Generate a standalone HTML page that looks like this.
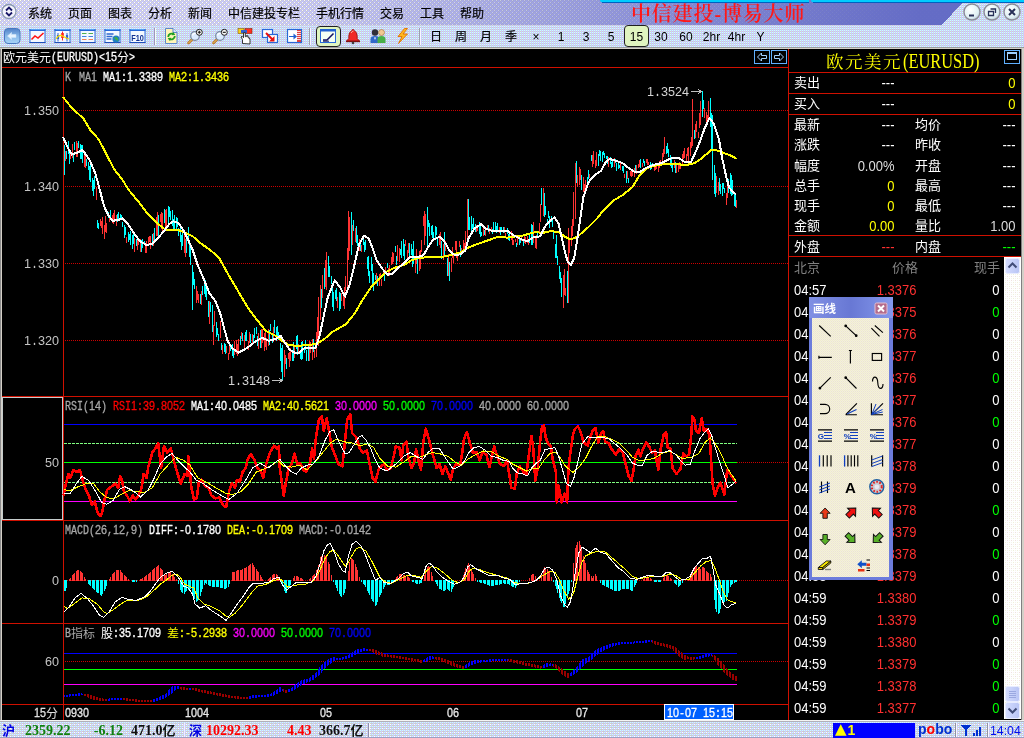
<!DOCTYPE html>
<html lang="zh"><head><meta charset="utf-8"><title>中信建投-博易大师</title><style>
html,body{margin:0;padding:0;background:#000}
#app{will-change:transform;position:relative;width:1024px;height:738px;overflow:hidden;background:#000;font-family:"Liberation Sans","Noto Sans CJK SC",sans-serif;font-size:12px;line-height:1}
#app div,#app span{position:absolute;white-space:nowrap;box-sizing:border-box}
.cj{font-family:"Liberation Sans","Noto Sans CJK SC",sans-serif;font-size:12px;line-height:12px;-webkit-text-stroke:0.2px}
.ar{font-family:"Liberation Sans","Noto Sans CJK SC",sans-serif;font-size:13px;line-height:13px}
.t i{font-style:normal}
.title{font-family:"Liberation Serif","Noto Serif CJK SC",serif;font-weight:600;font-size:20px;line-height:22px;color:#ff1818;letter-spacing:0.85px}
.pb{font-family:"Liberation Sans",sans-serif;font-size:12px;line-height:12px}
.rh{font-family:"Liberation Serif","Noto Serif CJK SC",serif;font-size:19px;line-height:20px;color:#ffff00}
.rc{font-family:"Liberation Sans","Noto Sans CJK SC",sans-serif;font-size:13px;line-height:13px}
.sb{font-family:"Liberation Serif","Noto Serif CJK SC",serif;font-weight:bold;font-size:14px;line-height:14px}
.sbc{font-family:"Liberation Serif","Noto Sans CJK SC",sans-serif;font-weight:bold;font-size:13px;line-height:14px}
.pobo{font-family:"Liberation Sans",sans-serif;font-weight:bold;font-size:14px;line-height:15px;color:#0030d0}
.mg{font-size:0;line-height:0}
.mg i{position:relative;display:inline-block;vertical-align:top;white-space:pre;transform-origin:0 0;overflow:visible}
.mg .c6{font-family:"Liberation Sans","Noto Sans CJK SC",sans-serif;font-size:12px;line-height:12px}
.mg .n6{top:0.4px;font-family:"Liberation Mono",monospace;font-size:12.2px;line-height:12px;transform:scaleX(0.8197);-webkit-text-stroke:0.3px}
.mg .d6{top:-0.6px;font-family:"Liberation Sans",sans-serif;font-size:12.4px;line-height:12px;transform:scaleX(0.8703);-webkit-text-stroke:0.3px}
.mg .n7{font-family:"Liberation Mono",monospace;font-size:14px;line-height:14px;transform:scaleX(0.8333)}
.mg .d7{font-family:"Liberation Sans",sans-serif;font-size:12.6px;line-height:14px}
.axc{color:#c4c4c4}
.ar{transform:scaleY(1.1)}
.lg{color:#dcdcdc}
.w{color:#fff}.y{color:#ff0}.g{color:#a8a8a8}.r{color:#ff3030}.gr{color:#0f0}.m{color:#f0f}.b{color:#00f}.dg{color:#808080}
</style></head><body><div id="app">
<svg width="1024" height="49" viewBox="0 0 1024 49" shape-rendering="crispEdges" style="position:absolute;left:0;top:0"><defs><pattern id="p1" width="4" height="4" patternUnits="userSpaceOnUse"><rect width="4" height="4" fill="#ccccff"/><rect x="1" y="0" width="1" height="1" fill="#cccccc"/><rect x="3" y="2" width="1" height="1" fill="#cccccc"/><rect x="0" y="1" width="1" height="1" fill="#cccccc"/><rect x="2" y="3" width="1" height="1" fill="#cccccc"/><rect x="1" y="2" width="1" height="1" fill="#c8c8e0"/><rect x="3" y="0" width="1" height="1" fill="#c8c8e0"/><rect x="0" y="0" width="1" height="1" fill="#fff"/><rect x="2" y="2" width="1" height="1" fill="#fff"/></pattern><pattern id="p2" width="4" height="4" patternUnits="userSpaceOnUse"><rect width="4" height="4" fill="#ccccff"/><rect x="0" y="0" width="1" height="1" fill="#ccffff"/><rect x="2" y="2" width="1" height="1" fill="#ccffff"/><rect x="2" y="0" width="1" height="1" fill="#ccffff"/><rect x="0" y="2" width="1" height="1" fill="#ccffff"/><rect x="0" y="1" width="1" height="1" fill="#cccccc"/><rect x="2" y="1" width="1" height="1" fill="#cccccc"/><rect x="0" y="3" width="1" height="1" fill="#cccccc"/><rect x="2" y="3" width="1" height="1" fill="#cccccc"/></pattern><linearGradient id="tg" x1="0" x2="1" y1="0" y2="0"><stop offset="0" stop-color="#6068c4" stop-opacity="0"/><stop offset="0.27" stop-color="#6068c4" stop-opacity="0.03"/><stop offset="0.5" stop-color="#6068c4" stop-opacity="0.38"/><stop offset="0.7" stop-color="#6068c4" stop-opacity="0.72"/><stop offset="0.9" stop-color="#6068c4" stop-opacity="0.96"/><stop offset="1" stop-color="#6068c4" stop-opacity="0.96"/></linearGradient></defs><rect x="0" y="0" width="1024" height="25" fill="url(#p1)"/><rect x="0" y="0" width="1024" height="25" fill="url(#tg)"/><polygon points="942,25 962,3 1024,3 1024,25" fill="url(#p2)"/><rect x="0" y="25" width="1024" height="22" fill="url(#p2)"/><rect x="0" y="47" width="1024" height="1" fill="#9c9c9c"/><rect x="0" y="48" width="1024" height="1" fill="#d4d0c8"/><path d="M600 0H809V2.5H603Q600 2.5 600 0Z" fill="#00ccff" shape-rendering="auto"/><path d="M811 0H1024V2.5H814Q811 2.5 811 0Z" fill="#00ccff" shape-rendering="auto"/><rect x="602" y="2" width="207" height="1" fill="#0060c0"/><rect x="813" y="2" width="211" height="1" fill="#0060c0"/></svg>
<div style="left:0;top:49px;width:1px;height:671px;background:#8c8c8c"></div>
<div style="left:1px;top:49px;width:1px;height:671px;background:#d4d0c8"></div>
<div style="left:1021px;top:49px;width:1px;height:671px;background:#808080"></div>
<div style="left:1022px;top:49px;width:2px;height:671px;background:#d4d0c8"></div>
<svg id="chart" width="1024" height="738" viewBox="0 0 1024 738" shape-rendering="crispEdges" style="position:absolute;left:0;top:0"><line x1="65" y1="110.5" x2="788" y2="110.5" stroke="#cc0000" stroke-width="1" stroke-dasharray="1 1"/>
<line x1="65" y1="186.5" x2="788" y2="186.5" stroke="#cc0000" stroke-width="1" stroke-dasharray="1 1"/>
<line x1="65" y1="263.5" x2="788" y2="263.5" stroke="#cc0000" stroke-width="1" stroke-dasharray="1 1"/>
<line x1="65" y1="340.5" x2="788" y2="340.5" stroke="#cc0000" stroke-width="1" stroke-dasharray="1 1"/>
<line x1="737" y1="462.5" x2="788" y2="462.5" stroke="#cc0000" stroke-width="1" stroke-dasharray="1 1"/>
<line x1="65" y1="580.5" x2="788" y2="580.5" stroke="#cc0000" stroke-width="1" stroke-dasharray="1 1"/>
<line x1="65" y1="661.5" x2="788" y2="661.5" stroke="#cc0000" stroke-width="1" stroke-dasharray="1 1"/>
<line x1="2" y1="67.5" x2="789" y2="67.5" stroke="#d01000" stroke-width="1"/>
<line x1="2" y1="396.5" x2="789" y2="396.5" stroke="#d01000" stroke-width="1"/>
<line x1="2" y1="520.5" x2="789" y2="520.5" stroke="#d01000" stroke-width="1"/>
<line x1="2" y1="623.5" x2="789" y2="623.5" stroke="#d01000" stroke-width="1"/>
<line x1="2" y1="704.5" x2="789" y2="704.5" stroke="#d01000" stroke-width="1"/>
<line x1="63.5" y1="67" x2="63.5" y2="720" stroke="#d01000" stroke-width="1"/>
<line x1="788.5" y1="49" x2="788.5" y2="720" stroke="#d01000" stroke-width="1"/>
<line x1="789" y1="72.5" x2="1021" y2="72.5" stroke="#d01000" stroke-width="1"/>
<line x1="789" y1="93.5" x2="1021" y2="93.5" stroke="#d01000" stroke-width="1"/>
<line x1="789" y1="114.5" x2="1021" y2="114.5" stroke="#d01000" stroke-width="1"/>
<line x1="789" y1="235.5" x2="1021" y2="235.5" stroke="#d01000" stroke-width="1"/>
<line x1="789" y1="256.5" x2="1021" y2="256.5" stroke="#d01000" stroke-width="1"/>
<line x1="64" y1="424.5" x2="737" y2="424.5" stroke="#0000ff" stroke-width="1"/>
<line x1="64" y1="462.5" x2="737" y2="462.5" stroke="#00ff00" stroke-width="1"/>
<line x1="64" y1="501.5" x2="737" y2="501.5" stroke="#ff00ff" stroke-width="1"/>
<line x1="64" y1="443.5" x2="737" y2="443.5" stroke="#80ff80" stroke-width="1" stroke-dasharray="3 1"/>
<line x1="64" y1="482.5" x2="737" y2="482.5" stroke="#80ff80" stroke-width="1" stroke-dasharray="3 1"/>
<line x1="64" y1="653.5" x2="737" y2="653.5" stroke="#0000ff" stroke-width="1"/>
<line x1="64" y1="669.5" x2="737" y2="669.5" stroke="#00ff00" stroke-width="1"/>
<line x1="64" y1="684.5" x2="737" y2="684.5" stroke="#ff00ff" stroke-width="1"/>
<rect x="2.5" y="397.5" width="60" height="122" fill="none" stroke="#c4cccc" stroke-width="1"/>
<path d="M64.5 145 V175M66.5 151 V159M68.5 141 V154M69.5 151 V164M73.5 155 V162M74.5 142 V150M78.5 141 V148M80.5 144 V159M81.5 145 V159M82.5 145 V163M86.5 159 V166M88.5 162 V170M89.5 166 V180M90.5 165 V182M92.5 178 V191M93.5 180 V196M94.5 176 V189M97.5 220 V228M98.5 223 V229M108.5 212 V218M110.5 210 V217M117.5 214 V222M118.5 212 V221M120.5 214 V219M121.5 215 V219M122.5 222 V227M124.5 225 V238M125.5 227 V235M128.5 232 V242M129.5 234 V240M130.5 231 V245M132.5 235 V249M133.5 234 V244M136.5 239 V246M141.5 240 V252M142.5 239 V248M144.5 241 V245M152.5 234 V246M154.5 228 V242M158.5 215 V237M164.5 209 V223M168.5 206 V223M169.5 207 V217M170.5 211 V220M172.5 210 V226M173.5 219 V231M174.5 215 V231M176.5 217 V229M177.5 218 V227M178.5 228 V236M180.5 228 V242M181.5 235 V250M182.5 231 V246M186.5 238 V253M188.5 227 V244M189.5 242 V257M190.5 243 V265M192.5 265 V310M193.5 272 V285M194.5 279 V289M200.5 294 V304M202.5 286 V295M204.5 282 V294M205.5 280 V297M206.5 288 V300M208.5 301 V317M210.5 302 V312M212.5 305 V332M216.5 322 V337M217.5 328 V335M218.5 334 V341M221.5 343 V350M224.5 343 V352M225.5 344 V354M230.5 346 V351M232.5 344 V356M233.5 348 V358M240.5 336 V345M242.5 333 V341M245.5 332 V341M246.5 330 V341M250.5 334 V343M253.5 335 V344M254.5 328 V338M256.5 327 V334M257.5 336 V346M260.5 330 V348M269.5 330 V345M270.5 324 V331M272.5 335 V343M274.5 320 V333M276.5 327 V341M277.5 326 V338M278.5 332 V340M280.5 343 V361M281.5 348 V372M282.5 345 V380M286.5 358 V369M292.5 353 V361M293.5 342 V361M296.5 336 V349M297.5 335 V355M300.5 351 V359M301.5 342 V360M302.5 341 V359M304.5 347 V353M305.5 340 V350M306.5 350 V361M308.5 344 V361M313.5 339 V352M321.5 289 V308M324.5 268 V289M328.5 256 V277M329.5 266 V277M331.5 276 V284M332.5 288 V307M333.5 292 V311M335.5 290 V299M336.5 288 V301M339.5 292 V311M340.5 293 V309M351.5 212 V255M353.5 220 V231M356.5 226 V243M357.5 235 V246M360.5 240 V251M363.5 239 V245M364.5 242 V252M365.5 240 V250M367.5 257 V269M368.5 256 V276M369.5 271 V283M371.5 257 V271M372.5 264 V285M373.5 273 V291M375.5 275 V280M377.5 276 V286M384.5 272 V281M387.5 263 V268M395.5 246 V252M396.5 256 V265M400.5 249 V255M401.5 241 V258M403.5 239 V256M404.5 244 V260M409.5 243 V256M411.5 244 V255M412.5 249 V267M413.5 241 V264M417.5 258 V274M427.5 207 V250M428.5 220 V227M429.5 223 V236M431.5 226 V235M432.5 225 V238M433.5 232 V238M435.5 226 V238M436.5 227 V235M437.5 239 V246M441.5 241 V259M444.5 232 V256M447.5 258 V276M449.5 262 V281M460.5 245 V257M468.5 199 V230M469.5 217 V230M471.5 216 V232M472.5 224 V229M473.5 218 V232M475.5 224 V232M479.5 222 V234M480.5 225 V237M481.5 232 V236M484.5 230 V235M488.5 225 V232M492.5 229 V234M493.5 222 V232M495.5 222 V230M496.5 226 V233M497.5 223 V230M500.5 227 V235M501.5 227 V232M503.5 227 V233M507.5 228 V234M508.5 234 V240M509.5 232 V241M516.5 243 V247M519.5 237 V245M520.5 238 V243M523.5 240 V246M529.5 233 V243M531.5 224 V245M532.5 225 V245M537.5 232 V237M541.5 188 V205M544.5 193 V217M545.5 206 V215M547.5 219 V225M548.5 211 V218M549.5 216 V228M551.5 216 V222M552.5 220 V227M553.5 230 V239M555.5 244 V258M556.5 235 V258M557.5 256 V265M559.5 266 V279M560.5 272 V283M561.5 278 V297M567.5 271 V303M576.5 161 V183M581.5 175 V190M587.5 177 V182M588.5 170 V179M591.5 155 V161M598.5 154 V166M599.5 150 V156M600.5 151 V161M602.5 152 V162M603.5 151 V155M604.5 153 V158M606.5 156 V159M607.5 156 V164M610.5 157 V164M611.5 162 V168M612.5 160 V167M615.5 159 V163M616.5 163 V171M618.5 163 V169M619.5 165 V168M622.5 166 V171M623.5 166 V173M626.5 171 V183M628.5 178 V183M635.5 165 V172M640.5 159 V168M643.5 159 V163M644.5 161 V166M650.5 162 V170M651.5 164 V169M652.5 163 V167M666.5 146 V154M667.5 143 V153M668.5 149 V157M670.5 155 V166M671.5 157 V168M672.5 163 V172M675.5 162 V173M694.5 130 V139M702.5 91 V117M703.5 100 V109M710.5 98 V127M711.5 113 V150M712.5 115 V180M714.5 165 V194M715.5 173 V197M719.5 178 V191M720.5 184 V194M722.5 183 V196M723.5 183 V189M724.5 188 V193M728.5 179 V193M730.5 173 V194M731.5 175 V196M732.5 180 V195M734.5 193 V206M735.5 194 V207" stroke="#00ffff" stroke-width="1" fill="none"/>
<path d="M65.5 151 V161M70.5 150 V159M72.5 144 V158M76.5 141 V157M77.5 143 V157M84.5 155 V167M85.5 153 V168M96.5 187 V200M100.5 219 V226M101.5 221 V228M102.5 217 V234M104.5 225 V239M105.5 216 V232M106.5 223 V233M109.5 215 V222M112.5 215 V223M113.5 213 V224M114.5 210 V221M116.5 215 V226M126.5 237 V243M134.5 238 V252M137.5 239 V250M138.5 238 V245M140.5 239 V252M145.5 243 V253M146.5 241 V253M148.5 237 V244M149.5 236 V242M150.5 236 V249M153.5 233 V246M156.5 217 V236M157.5 212 V236M160.5 214 V222M161.5 212 V229M162.5 213 V232M165.5 210 V229M166.5 209 V227M184.5 234 V253M185.5 239 V257M196.5 286 V303M197.5 291 V300M198.5 294 V303M201.5 291 V305M209.5 301 V324M213.5 325 V345M214.5 311 V326M220.5 321 V338M222.5 345 V354M226.5 346 V353M228.5 353 V360M229.5 345 V354M234.5 341 V355M236.5 340 V354M237.5 344 V356M238.5 339 V353M241.5 332 V339M244.5 335 V350M248.5 341 V350M249.5 332 V343M252.5 334 V345M258.5 333 V349M261.5 329 V348M262.5 329 V343M264.5 333 V351M265.5 331 V347M266.5 338 V350M268.5 329 V346M273.5 327 V342M284.5 350 V377M285.5 355 V364M288.5 353 V359M289.5 352 V367M290.5 348 V361M294.5 346 V358M298.5 344 V352M309.5 341 V361M310.5 342 V353M312.5 339 V360M314.5 350 V358M316.5 332 V357M317.5 317 V339M318.5 297 V346M320.5 285 V320M322.5 275 V298M325.5 260 V287M326.5 252 V290M337.5 297 V308M341.5 293 V301M343.5 296 V306M344.5 287 V309M345.5 276 V291M347.5 248 V293M348.5 211 V260M349.5 217 V251M352.5 225 V245M355.5 228 V242M359.5 239 V251M361.5 245 V252M376.5 273 V284M379.5 274 V286M380.5 273 V279M381.5 279 V286M383.5 269 V275M385.5 267 V274M388.5 268 V276M389.5 265 V276M391.5 257 V265M392.5 252 V264M393.5 253 V262M397.5 245 V261M399.5 248 V262M405.5 240 V246M407.5 250 V259M408.5 243 V253M415.5 258 V273M416.5 249 V264M419.5 251 V271M420.5 250 V269M421.5 240 V252M423.5 216 V226M424.5 211 V245M425.5 214 V236M439.5 234 V245M440.5 232 V248M443.5 244 V260M445.5 241 V251M448.5 254 V276M451.5 258 V272M452.5 247 V258M453.5 253 V263M455.5 241 V250M456.5 241 V258M457.5 252 V261M459.5 241 V247M461.5 248 V255M463.5 240 V249M464.5 243 V252M465.5 231 V247M467.5 199 V240M476.5 225 V232M477.5 226 V231M483.5 225 V236M485.5 229 V236M487.5 225 V230M489.5 228 V234M491.5 227 V231M499.5 227 V233M504.5 227 V233M505.5 233 V237M511.5 231 V240M512.5 238 V245M513.5 240 V245M515.5 239 V242M517.5 236 V245M521.5 237 V241M524.5 236 V243M525.5 237 V244M527.5 236 V243M528.5 240 V245M533.5 222 V243M535.5 236 V248M536.5 235 V249M539.5 223 V234M540.5 204 V222M543.5 188 V216M563.5 275 V308M564.5 269 V295M565.5 288 V296M568.5 228 V303M569.5 240 V253M571.5 226 V246M572.5 219 V236M573.5 192 V226M575.5 163 V219M577.5 175 V187M579.5 167 V185M580.5 169 V180M583.5 177 V192M584.5 184 V194M585.5 180 V189M589.5 174 V178M592.5 155 V167M593.5 151 V164M595.5 160 V168M596.5 152 V166M608.5 157 V167M614.5 158 V167M620.5 163 V170M624.5 174 V178M627.5 171 V179M630.5 171 V176M631.5 170 V177M632.5 170 V176M634.5 168 V177M636.5 165 V174M638.5 164 V168M639.5 160 V167M642.5 163 V167M646.5 159 V163M647.5 159 V165M648.5 162 V165M654.5 165 V171M655.5 164 V170M656.5 165 V169M658.5 164 V172M659.5 161 V168M660.5 160 V165M662.5 153 V161M663.5 149 V157M664.5 137 V154M674.5 160 V168M676.5 165 V173M678.5 164 V172M679.5 162 V169M680.5 164 V169M682.5 154 V165M683.5 151 V159M684.5 148 V158M686.5 154 V163M687.5 148 V156M688.5 147 V163M690.5 142 V156M691.5 137 V148M692.5 99 V146M695.5 124 V138M696.5 121 V132M698.5 132 V138M699.5 113 V128M700.5 101 V125M704.5 108 V118M706.5 112 V123M707.5 115 V121M708.5 101 V118M716.5 176 V193M718.5 182 V195M726.5 193 V205M727.5 180 V198M736.5 200 V208" stroke="#ff3333" stroke-width="1" fill="none"/>
<path d="M64.5 580 V591M65.5 580 V591M66.5 580 V588M88.5 580 V584M89.5 580 V585M90.5 580 V586M92.5 580 V588M93.5 580 V589M94.5 580 V590M96.5 580 V592M97.5 580 V593M98.5 580 V593M100.5 580 V595M101.5 580 V596M102.5 580 V594M104.5 580 V591M105.5 580 V589M106.5 580 V586M132.5 580 V582M133.5 580 V582M134.5 580 V582M136.5 580 V582M178.5 580 V584M180.5 580 V590M181.5 580 V592M182.5 580 V593M184.5 580 V594M185.5 580 V592M186.5 580 V591M188.5 580 V590M189.5 580 V589M190.5 580 V589M192.5 580 V594M193.5 580 V597M194.5 580 V599M196.5 580 V602M197.5 580 V601M198.5 580 V600M200.5 580 V596M201.5 580 V592M202.5 580 V589M204.5 580 V585M205.5 580 V583M206.5 580 V584M208.5 580 V585M209.5 580 V586M210.5 580 V586M212.5 580 V587M213.5 580 V587M214.5 580 V587M216.5 580 V587M217.5 580 V587M218.5 580 V587M220.5 580 V588M221.5 580 V588M222.5 580 V588M224.5 580 V589M225.5 580 V589M226.5 580 V588M228.5 580 V587M229.5 580 V584M281.5 580 V584M282.5 580 V586M284.5 580 V591M285.5 580 V593M286.5 580 V593M288.5 580 V589M289.5 580 V587M290.5 580 V585M333.5 580 V582M335.5 580 V585M336.5 580 V588M337.5 580 V591M339.5 580 V594M340.5 580 V596M341.5 580 V597M343.5 580 V595M344.5 580 V593M345.5 580 V589M361.5 580 V582M363.5 580 V584M364.5 580 V585M365.5 580 V587M367.5 580 V591M368.5 580 V593M369.5 580 V595M371.5 580 V599M372.5 580 V601M373.5 580 V602M375.5 580 V606M376.5 580 V605M377.5 580 V602M379.5 580 V597M380.5 580 V595M381.5 580 V593M383.5 580 V589M384.5 580 V587M385.5 580 V585M387.5 580 V585M388.5 580 V585M389.5 580 V585M391.5 580 V584M392.5 580 V583M393.5 580 V582M412.5 580 V582M413.5 580 V582M415.5 580 V583M416.5 580 V584M417.5 580 V584M419.5 580 V584M420.5 580 V583M421.5 580 V583M435.5 580 V582M436.5 580 V584M437.5 580 V586M439.5 580 V589M440.5 580 V589M441.5 580 V590M443.5 580 V591M444.5 580 V591M445.5 580 V590M447.5 580 V589M448.5 580 V590M449.5 580 V591M451.5 580 V592M452.5 580 V589M453.5 580 V587M477.5 580 V582M479.5 580 V582M480.5 580 V583M481.5 580 V583M483.5 580 V583M484.5 580 V584M485.5 580 V584M487.5 580 V585M488.5 580 V585M489.5 580 V586M491.5 580 V586M492.5 580 V586M493.5 580 V586M495.5 580 V585M496.5 580 V585M497.5 580 V585M499.5 580 V585M500.5 580 V584M501.5 580 V584M503.5 580 V583M504.5 580 V584M505.5 580 V584M507.5 580 V584M508.5 580 V584M509.5 580 V585M511.5 580 V586M512.5 580 V587M513.5 580 V587M515.5 580 V588M516.5 580 V586M517.5 580 V584M519.5 580 V582M553.5 580 V582M555.5 580 V586M556.5 580 V589M557.5 580 V593M559.5 580 V598M560.5 580 V601M561.5 580 V603M563.5 580 V607M564.5 580 V607M565.5 580 V604M567.5 580 V598M568.5 580 V594M569.5 580 V591M571.5 580 V582M600.5 580 V583M602.5 580 V585M603.5 580 V585M604.5 580 V586M606.5 580 V587M607.5 580 V587M608.5 580 V588M610.5 580 V589M611.5 580 V589M612.5 580 V590M614.5 580 V591M615.5 580 V591M616.5 580 V591M618.5 580 V591M619.5 580 V591M620.5 580 V590M622.5 580 V589M623.5 580 V589M624.5 580 V589M626.5 580 V589M627.5 580 V589M628.5 580 V589M630.5 580 V590M631.5 580 V591M632.5 580 V591M634.5 580 V587M635.5 580 V585M636.5 580 V583M654.5 580 V582M655.5 580 V582M656.5 580 V582M658.5 580 V582M659.5 580 V582M660.5 580 V582M674.5 580 V583M675.5 580 V584M676.5 580 V585M678.5 580 V587M679.5 580 V586M680.5 580 V585M682.5 580 V583M714.5 580 V600M715.5 580 V609M716.5 580 V612M718.5 580 V614M719.5 580 V613M720.5 580 V609M722.5 580 V603M723.5 580 V602M724.5 580 V602M726.5 580 V601M727.5 580 V597M728.5 580 V593M730.5 580 V587M731.5 580 V585M732.5 580 V584M734.5 580 V583M735.5 580 V582M736.5 580 V582" stroke="#00ffff" stroke-width="1" fill="none"/>
<path d="M69.5 579 V581M70.5 578 V581M72.5 575 V581M73.5 574 V581M74.5 573 V581M76.5 571 V581M77.5 570 V581M78.5 570 V581M80.5 571 V581M81.5 572 V581M82.5 573 V581M84.5 577 V581M85.5 579 V581M109.5 579 V581M110.5 577 V581M112.5 574 V581M113.5 573 V581M114.5 572 V581M116.5 570 V581M117.5 570 V581M118.5 570 V581M120.5 570 V581M121.5 572 V581M122.5 573 V581M124.5 575 V581M125.5 576 V581M126.5 577 V581M128.5 579 V581M140.5 579 V581M141.5 579 V581M142.5 578 V581M144.5 577 V581M145.5 576 V581M146.5 575 V581M148.5 574 V581M149.5 573 V581M150.5 572 V581M152.5 570 V581M153.5 569 V581M154.5 568 V581M156.5 567 V581M157.5 566 V581M158.5 565 V581M160.5 568 V581M161.5 569 V581M162.5 570 V581M164.5 574 V581M165.5 575 V581M166.5 574 V581M168.5 572 V581M169.5 572 V581M170.5 572 V581M172.5 574 V581M173.5 575 V581M174.5 577 V581M176.5 579 V581M232.5 572 V581M233.5 572 V581M234.5 572 V581M236.5 571 V581M237.5 570 V581M238.5 570 V581M240.5 570 V581M241.5 570 V581M242.5 569 V581M244.5 568 V581M245.5 568 V581M246.5 567 V581M248.5 566 V581M249.5 565 V581M250.5 564 V581M252.5 563 V581M253.5 565 V581M254.5 567 V581M256.5 569 V581M257.5 571 V581M258.5 572 V581M260.5 575 V581M261.5 577 V581M262.5 579 V581M268.5 579 V581M269.5 578 V581M270.5 577 V581M272.5 575 V581M273.5 574 V581M274.5 574 V581M276.5 574 V581M277.5 575 V581M278.5 577 V581M293.5 578 V581M294.5 576 V581M296.5 576 V581M297.5 576 V581M298.5 577 V581M300.5 578 V581M301.5 578 V581M302.5 579 V581M309.5 579 V581M310.5 578 V581M312.5 576 V581M313.5 575 V581M314.5 574 V581M316.5 570 V581M317.5 569 V581M318.5 565 V581M320.5 557 V581M321.5 556 V581M322.5 555 V581M324.5 555 V581M325.5 556 V581M326.5 557 V581M328.5 562 V581M329.5 564 V581M331.5 575 V581M348.5 571 V581M349.5 562 V581M351.5 558 V581M352.5 559 V581M353.5 560 V581M355.5 564 V581M356.5 567 V581M357.5 570 V581M359.5 577 V581M395.5 579 V581M396.5 577 V581M397.5 576 V581M399.5 574 V581M400.5 574 V581M401.5 574 V581M403.5 575 V581M404.5 575 V581M405.5 576 V581M407.5 576 V581M408.5 577 V581M409.5 578 V581M424.5 575 V581M425.5 570 V581M427.5 567 V581M428.5 566 V581M429.5 567 V581M431.5 572 V581M432.5 576 V581M463.5 575 V581M464.5 572 V581M465.5 568 V581M467.5 565 V581M468.5 563 V581M469.5 565 V581M471.5 569 V581M472.5 572 V581M473.5 574 V581M475.5 578 V581M529.5 578 V581M531.5 575 V581M532.5 574 V581M533.5 574 V581M535.5 576 V581M541.5 573 V581M543.5 569 V581M544.5 567 V581M545.5 568 V581M547.5 569 V581M548.5 571 V581M549.5 572 V581M551.5 577 V581M573.5 563 V581M575.5 548 V581M576.5 545 V581M577.5 542 V581M579.5 541 V581M580.5 545 V581M581.5 549 V581M583.5 556 V581M584.5 560 V581M585.5 563 V581M587.5 570 V581M588.5 572 V581M589.5 574 V581M591.5 576 V581M592.5 578 V581M593.5 576 V581M595.5 574 V581M596.5 576 V581M643.5 579 V581M644.5 578 V581M646.5 577 V581M647.5 576 V581M648.5 577 V581M650.5 578 V581M651.5 579 V581M663.5 578 V581M664.5 576 V581M666.5 575 V581M667.5 575 V581M668.5 576 V581M670.5 578 V581M671.5 579 V581M688.5 579 V581M690.5 576 V581M691.5 574 V581M692.5 571 V581M694.5 568 V581M695.5 567 V581M696.5 566 V581M698.5 567 V581M699.5 568 V581M700.5 569 V581M702.5 567 V581M703.5 567 V581M704.5 568 V581M706.5 571 V581M707.5 572 V581M708.5 573 V581M710.5 574 V581M711.5 577 V581" stroke="#ff3333" stroke-width="1" fill="none"/>
<polyline points="63.0,97.0 71.0,107.0 83.4,118.6 90.3,130.0 99.0,139.8 106.9,155.4 114.7,170.0 122.5,179.8 128.4,189.6 138.1,201.3 147.9,214.0 157.7,223.8 165.5,229.6 177.2,229.6 185.0,232.5 192.8,236.4 200.6,243.3 210.4,250.1 219.0,257.8 228.8,275.4 238.6,292.0 248.4,308.6 258.1,321.3 266.0,331.0 275.7,336.0 283.5,341.8 289.4,345.3 297.2,345.7 307.0,345.3 316.7,343.8 324.5,338.9 332.3,332.0 346.0,324.2 355.2,312.8 363.0,299.1 370.8,287.4 378.6,279.6 386.4,271.8 394.2,267.9 404.0,265.0 411.8,260.1 419.6,257.7 429.4,257.3 441.1,257.1 450.9,255.2 460.6,252.3 468.4,247.4 476.3,244.5 486.0,241.0 497.7,237.0 507.5,237.6 511.7,237.0 523.4,235.4 535.2,232.1 543.0,232.9 550.8,231.0 558.6,232.1 564.5,236.4 569.3,239.0 574.2,238.4 580.0,234.5 587.9,227.6 597.7,217.9 603.0,210.8 612.7,201.0 622.5,195.1 632.3,187.3 638.1,177.6 642.0,172.7 647.9,167.8 657.7,164.9 667.4,163.9 677.2,164.3 687.0,164.9 694.8,163.0 700.6,159.0 706.5,154.1 711.4,149.8 716.3,150.2 724.0,153.1 731.9,156.0 736.8,159.0" fill="none" stroke="#ffff00" stroke-width="2" />
<polyline points="62.9,136.8 67.8,147.6 71.7,154.4 77.6,152.5 82.5,150.1 89.3,159.3 95.2,173.0 99.0,186.6 104.0,206.2 108.8,216.0 112.7,220.8 118.6,219.8 122.5,218.3 128.4,224.7 134.2,233.5 140.0,241.3 146.0,244.8 151.8,244.3 157.7,238.4 163.5,231.6 169.4,223.8 173.3,221.4 178.2,222.8 183.0,229.6 188.0,239.4 192.7,250.0 197.6,264.6 203.4,278.3 209.3,293.0 215.2,300.8 220.0,312.5 224.0,328.0 227.9,341.8 232.7,348.6 238.6,352.5 244.5,349.6 250.3,345.7 256.2,340.8 262.0,337.9 268.9,340.8 275.7,338.9 280.6,335.9 284.5,341.8 289.4,349.6 294.3,352.5 299.1,352.5 303.0,348.6 308.9,347.7 315.7,347.7 319.6,336.0 322.0,324.0 327.8,297.2 334.6,280.6 339.5,286.4 345.0,296.2 349.3,285.5 354.2,266.0 359.0,244.5 364.0,235.7 368.8,238.6 372.7,248.4 376.6,260.0 382.5,268.9 387.4,274.7 392.3,273.8 397.1,268.9 404.0,263.0 409.8,257.1 417.7,257.1 423.5,255.2 428.4,246.4 433.3,239.6 440.1,236.6 445.0,242.5 449.9,251.3 454.8,255.2 460.6,254.2 465.5,250.3 468.4,238.6 474.3,228.8 481.1,223.9 486.0,228.8 491.9,230.8 501.6,231.2 507.8,231.0 513.7,235.4 521.5,239.3 527.3,241.3 533.2,237.4 540.0,236.4 545.0,226.6 550.8,219.8 554.7,217.5 558.6,223.7 561.5,236.4 564.5,250.0 567.4,260.8 570.7,265.1 574.2,257.9 577.1,240.3 580.0,220.8 583.4,197.0 588.3,182.4 594.2,175.6 601.0,170.7 605.9,162.0 609.8,159.0 616.6,161.0 622.5,163.0 628.4,167.8 634.2,171.7 640.0,172.0 646.0,167.8 653.8,164.9 661.6,163.0 667.4,160.0 673.3,157.6 679.1,158.4 685.0,162.0 690.9,162.0 694.8,154.0 699.6,142.4 704.5,128.7 709.4,118.0 713.3,122.9 716.2,130.7 719.2,140.5 722.1,158.0 726.0,175.6 729.0,187.3 731.9,190.8 735.8,194.2" fill="none" stroke="#ffffff" stroke-width="2" />
<polyline points="63.5,495.5 65.4,485.7 68.4,474.0 70.3,477.9 73.2,470.0 77.1,472.0 80.0,470.0 82.0,477.9 85.0,487.7 88.9,495.5 91.8,505.2 94.7,501.3 97.7,513.0 100.6,516.0 102.5,511.0 104.5,499.4 107.4,489.6 111.3,486.7 115.2,483.8 118.2,487.7 120.1,476.0 122.0,479.8 124.0,491.6 127.0,495.5 129.9,501.3 132.8,495.5 135.7,499.4 138.7,495.5 141.6,487.7 143.6,474.0 146.5,477.9 148.4,466.2 152.3,452.5 155.3,448.6 158.2,443.1 161.1,468.1 164.0,445.7 167.0,452.5 170.9,448.6 174.8,464.2 177.7,474.0 180.7,483.8 184.6,474.0 187.5,476.0 188.5,456.4 191.4,487.7 193.9,499.4 196.8,498.4 198.8,481.8 201.7,479.8 204.6,485.7 208.6,487.7 211.5,495.5 215.4,498.4 219.3,497.4 223.2,505.2 226.1,507.2 229.1,491.6 232.0,482.8 234.9,487.7 236.9,479.8 239.8,481.8 242.7,472.0 245.7,468.1 247.6,459.3 250.9,454.0 254.5,460.3 257.4,468.1 260.3,470.0 263.2,477.9 266.2,464.2 270.0,452.5 274.0,445.7 276.9,448.6 278.9,446.6 279.8,468.1 281.8,481.8 283.8,495.5 285.7,483.8 288.6,468.1 291.6,464.2 294.5,453.5 297.4,464.2 300.4,463.2 303.3,470.0 306.2,472.0 310.1,462.3 312.1,448.6 314.0,458.4 316.0,436.9 318.9,419.3 321.8,416.4 323.8,431.0 326.7,418.3 328.7,429.0 331.6,446.6 335.5,456.4 338.4,464.2 342.3,466.2 344.3,448.6 347.2,419.3 350.2,414.4 352.1,433.0 356.0,436.9 359.9,448.6 362.9,452.5 366.8,450.5 369.7,464.2 372.6,477.9 375.5,481.8 378.5,470.0 380.0,467.1 383.9,464.2 386.8,470.0 390.7,468.1 393.7,456.4 395.6,446.6 399.5,447.6 401.5,460.3 403.4,444.7 406.4,441.8 408.3,456.4 411.3,468.1 414.2,462.3 416.1,449.6 419.0,462.3 421.0,470.0 423.4,440.8 425.9,428.7 428.8,438.8 431.2,448.6 433.7,457.4 436.6,468.1 439.6,464.2 442.5,474.0 445.4,466.2 448.4,474.0 450.7,479.8 453.2,468.1 456.2,464.2 460.0,465.2 462.0,454.5 464.0,438.8 466.9,432.0 469.8,442.7 472.8,452.5 476.7,452.5 479.6,460.3 482.5,452.5 486.4,454.5 489.4,467.1 492.3,454.5 494.3,446.6 497.2,456.4 500.1,464.2 504.0,466.2 507.0,460.3 508.9,472.0 511.3,487.7 514.8,488.6 516.7,474.0 519.6,466.2 523.6,472.0 526.5,474.0 528.4,458.4 531.4,435.9 533.3,448.6 535.3,480.8 537.8,468.1 540.2,440.8 542.1,426.1 544.0,425.7 545.6,436.9 548.0,443.7 550.9,446.6 552.9,460.3 555.8,472.0 556.8,502.3 558.7,485.7 561.6,502.3 564.6,493.5 567.1,502.3 568.5,468.1 570.4,452.5 572.9,435.0 574.9,429.0 577.8,426.1 580.7,432.0 583.7,442.7 587.6,445.7 589.5,438.8 592.5,431.0 595.4,428.1 598.3,442.7 600.9,434.0 603.2,431.0 605.2,441.8 609.0,443.7 612.0,449.6 615.9,454.5 618.8,449.6 622.7,452.5 625.7,464.2 628.6,476.0 631.5,480.8 633.5,470.0 635.4,456.4 638.4,449.6 640.3,456.4 643.2,448.6 646.2,442.3 649.1,446.6 652.0,452.5 655.0,450.5 656.9,462.3 658.3,470.0 660.8,448.6 663.8,434.0 666.1,432.0 667.7,447.6 670.6,448.6 672.5,468.1 676.4,474.0 680.4,469.1 683.3,453.5 686.2,456.4 689.1,454.5 691.1,436.9 692.5,416.4 694.4,419.3 696.0,431.0 698.9,433.0 701.8,418.3 703.8,431.0 706.7,429.0 709.6,435.0 711.0,458.4 712.6,483.8 714.9,495.5 717.5,487.7 720.4,482.8 724.3,494.5 727.2,470.0 730.2,474.0 733.1,477.9 736.0,483.4" fill="none" stroke="#ff0000" stroke-width="2.6" stroke-linejoin="round"/>
<polyline points="63.5,489.6 70.3,490.6 78.1,486.7 85.9,483.8 93.8,483.8 99.6,491.6 106.4,497.4 113.3,499.0 121.1,494.5 128.9,490.6 136.7,491.6 144.5,492.5 152.3,487.7 160.2,474.0 168.0,465.2 175.8,457.4 183.6,460.3 190.0,465.2 197.8,477.9 207.6,482.8 217.3,488.6 225.2,493.0 233.0,494.5 240.8,491.6 248.6,483.8 256.4,472.0 264.2,469.0 272.0,465.2 277.9,460.3 283.8,466.2 291.6,467.1 299.4,465.2 307.2,470.0 315.0,462.3 322.8,452.5 330.6,442.7 336.5,439.2 344.3,441.8 352.1,443.1 359.9,445.7 367.8,443.7 373.6,447.6 380.0,458.4 387.8,466.2 395.6,467.1 403.4,462.3 411.3,456.4 419.0,457.4 426.9,454.5 432.7,452.5 440.5,454.0 448.4,456.4 455.2,462.3 462.0,465.2 467.9,459.3 475.7,454.5 483.5,451.0 491.3,451.5 499.1,456.4 507.0,459.3 512.8,464.2 520.6,468.1 526.5,471.0 534.3,468.1 538.2,469.0 544.0,460.3 549.9,453.5 555.8,452.1 560.7,458.4 565.5,466.2 570.0,470.0 572.9,472.4 579.8,466.2 585.6,458.4 591.5,446.6 597.3,436.9 604.2,436.3 611.0,439.2 618.8,442.7 626.6,450.5 632.5,457.4 638.4,460.3 646.2,459.9 654.0,458.4 661.8,453.5 669.6,451.0 675.5,454.5 682.3,458.4 691.1,457.4 698.9,453.5 704.8,442.7 710.2,437.9 715.5,443.7 721.4,454.5 726.3,466.2 731.1,474.0 736.0,480.8" fill="none" stroke="#ffff00" stroke-width="1" />
<polyline points="63.5,493.5 70.3,493.5 76.2,483.8 82.0,476.3 88.9,480.8 95.7,491.6 101.6,502.3 106.4,504.3 113.3,500.4 119.1,489.6 125.0,486.7 132.8,490.6 140.6,497.0 148.4,489.6 154.3,477.9 160.2,464.2 166.0,457.4 171.9,453.5 177.7,460.3 185.5,468.1 190.0,472.0 195.9,479.8 203.7,483.8 211.5,489.6 221.3,495.5 229.1,499.4 236.9,493.5 244.7,481.8 252.5,468.1 260.3,463.2 268.1,468.1 274.0,463.2 279.8,459.3 285.7,466.2 291.6,472.0 296.4,474.0 301.3,468.1 307.2,465.2 313.0,464.2 318.9,456.4 324.8,440.8 329.6,432.0 333.6,429.6 337.5,438.8 341.4,446.6 345.3,454.0 349.2,452.5 354.0,444.7 359.0,436.9 361.9,435.5 365.8,439.8 370.7,448.6 375.5,460.3 380.0,468.1 386.8,471.0 395.6,464.2 403.4,456.4 410.3,452.5 416.1,456.4 423.0,459.3 427.9,452.5 432.7,448.6 439.6,449.0 444.5,456.4 448.4,462.3 453.2,469.1 460.0,466.2 465.0,460.3 468.9,452.5 473.8,447.6 479.6,446.6 485.5,450.5 491.3,456.4 497.2,457.4 503.0,460.3 508.9,461.3 512.8,468.1 517.7,473.0 522.6,474.0 527.5,475.9 531.4,468.1 536.3,463.2 540.2,460.3 545.0,449.6 549.9,448.6 554.8,447.6 558.7,456.4 562.6,470.0 566.5,483.8 570.4,486.3 573.9,477.9 577.8,462.3 581.7,444.7 587.6,436.9 595.4,437.5 603.2,437.5 609.0,438.8 614.9,443.7 620.8,448.6 626.6,454.5 632.5,463.2 637.4,465.2 642.3,465.2 647.1,455.4 652.0,451.5 657.9,452.1 663.8,452.5 669.6,450.5 675.5,454.5 680.4,460.3 685.2,465.2 690.1,464.2 695.0,450.5 699.9,438.8 704.8,432.0 708.3,429.0 711.6,435.0 715.5,448.6 720.4,464.2 724.3,476.0 727.8,487.7 732.1,484.7 736.0,480.8" fill="none" stroke="#ffffff" stroke-width="1" />
<polyline points="63.5,605.7 67.4,608.6 74.2,603.8 82.0,597.9 89.8,598.9 97.7,604.7 103.5,611.6 107.4,613.5 113.3,609.6 121.1,603.8 127.0,600.2 138.7,600.2 146.5,596.9 154.3,590.0 160.2,584.2 166.0,580.3 171.9,575.4 175.8,574.0 179.7,576.4 184.6,584.2 189.5,586.2 193.9,588.1 197.8,597.9 203.7,603.8 211.5,606.7 219.3,610.6 225.2,615.5 229.1,617.4 234.9,613.5 242.7,604.7 250.5,594.0 257.4,586.2 266.2,584.2 274.0,580.3 280.8,579.3 287.7,587.1 295.5,585.2 305.2,584.2 313.0,581.3 318.9,572.5 324.8,558.8 329.6,552.0 333.6,550.0 338.4,555.9 343.3,563.7 346.3,566.6 351.1,556.9 356.0,549.1 359.9,547.1 365.8,551.0 371.6,560.8 377.5,572.5 380.0,577.4 385.9,582.3 391.7,583.2 399.5,579.3 407.3,575.4 413.2,575.4 421.0,577.4 426.9,570.5 431.8,566.6 436.6,567.6 444.5,573.5 452.3,580.3 458.1,582.7 464.0,580.3 468.9,571.5 472.8,568.2 479.6,569.6 487.4,572.5 497.2,575.4 507.0,578.0 513.8,582.3 520.6,583.8 528.4,583.2 536.3,580.3 543.0,575.4 549.9,571.5 554.8,572.1 558.7,578.4 563.6,590.0 568.5,598.9 572.4,595.9 573.9,592.0 577.8,576.4 581.7,562.7 585.6,555.9 591.5,553.0 597.3,551.4 605.2,552.0 611.0,556.9 618.8,563.7 626.6,570.5 632.5,576.4 638.4,578.8 646.2,577.4 654.0,576.4 661.8,577.0 669.6,574.0 675.5,575.4 681.3,579.3 689.1,579.3 695.0,572.5 700.9,565.7 706.7,561.2 711.6,560.8 715.5,569.6 719.4,580.3 723.3,592.0 727.2,599.5 732.1,601.8 736.0,602.8" fill="none" stroke="#ffff00" stroke-width="1" />
<polyline points="63.5,612.5 68.4,607.7 75.2,597.9 81.0,593.4 87.9,598.9 93.8,606.7 99.6,615.5 103.5,617.4 109.4,611.6 115.2,601.8 122.0,597.3 128.9,599.8 136.7,600.2 144.5,596.9 150.4,591.0 155.3,584.2 160.2,577.4 166.0,573.5 171.9,571.1 177.7,576.4 183.6,586.2 188.5,588.1 192.4,594.0 194.9,603.8 199.8,608.2 205.6,605.7 211.5,610.6 219.3,615.5 226.1,620.4 231.0,613.5 236.9,604.7 242.7,596.9 248.6,588.1 253.5,583.2 262.3,583.2 268.1,582.7 274.0,578.4 278.9,577.4 282.8,585.2 286.7,590.0 291.6,586.2 296.4,582.3 303.3,582.7 311.1,582.3 316.0,576.4 319.9,564.7 323.8,551.0 327.7,544.2 330.6,543.6 334.5,553.0 338.4,563.7 342.3,570.5 345.3,572.1 348.2,556.9 352.1,544.2 356.0,541.3 360.9,546.1 365.8,555.9 370.7,568.6 375.5,580.3 380.0,577.4 383.9,582.3 389.8,583.8 397.6,579.3 403.4,573.5 407.3,572.1 412.2,576.4 419.0,577.4 422.0,579.3 425.9,566.6 428.8,563.1 431.8,564.7 436.6,571.5 442.5,577.4 448.4,581.3 454.2,584.2 460.0,582.3 464.0,577.4 467.9,566.6 470.8,564.7 475.7,568.6 481.6,571.5 489.4,576.0 497.2,575.4 505.0,578.4 509.9,579.3 514.8,584.2 522.6,583.8 530.4,582.7 536.3,580.3 540.2,576.4 545.0,568.2 548.9,567.0 552.9,570.5 556.8,580.3 560.7,595.9 564.6,604.7 567.5,607.3 570.4,601.8 572.9,588.1 575.9,568.6 578.8,553.0 582.1,547.1 586.6,550.0 590.5,552.6 595.4,548.1 600.3,552.0 606.1,554.0 612.0,560.8 617.9,567.6 623.7,571.5 630.5,578.4 637.4,579.3 644.2,576.4 650.1,575.0 655.9,576.4 661.8,576.4 665.7,572.9 669.6,572.1 674.5,576.4 679.4,580.3 685.2,579.3 690.1,576.4 694.0,568.6 697.9,563.7 702.8,558.2 706.7,558.4 710.6,556.3 712.6,566.6 715.5,584.2 720.4,595.9 724.3,605.7 727.8,608.0 731.1,604.7 736.0,603.4" fill="none" stroke="#ffffff" stroke-width="1" />
<path d="M64.5 694.8 V696.7M66.5 694.6 V696.6M67.5 694.5 V696.6M69.5 694.4 V696.5M70.5 694.3 V696.4M72.5 694.2 V696.3M73.5 694.0 V696.2M75.5 693.7 V696.0M76.5 693.5 V695.9M78.5 693.2 V695.7M79.5 693.1 V695.6M81.5 693.2 V695.4M82.5 693.5 V695.3M108.5 698.5 V700.7M109.5 698.4 V700.6M111.5 698.2 V700.4M112.5 698.1 V700.4M114.5 697.9 V700.2M115.5 697.9 V700.1M117.5 697.9 V699.9M118.5 697.8 V699.9M120.5 697.7 V699.8M121.5 697.7 V699.7M153.5 699.2 V701.7M154.5 698.8 V701.6M156.5 698.1 V701.2M157.5 697.9 V701.0M159.5 697.0 V700.4M160.5 696.4 V700.0M162.5 695.1 V699.3M163.5 694.6 V698.9M165.5 693.6 V697.9M166.5 693.1 V697.4M168.5 690.4 V696.0M169.5 689.1 V695.3M171.5 686.8 V693.6M172.5 685.9 V692.6M174.5 685.9 V691.1M175.5 685.9 V690.3M177.5 685.6 V689.2M178.5 686.1 V689.1M189.5 687.8 V689.7M190.5 687.7 V689.6M249.5 696.4 V698.7M250.5 695.9 V698.7M252.5 695.2 V698.3M253.5 695.0 V698.1M255.5 695.1 V697.7M256.5 695.2 V697.5M258.5 695.0 V697.3M259.5 695.0 V697.2M261.5 694.8 V697.0M262.5 694.7 V696.9M264.5 694.6 V696.8M265.5 694.5 V696.7M267.5 694.3 V696.5M268.5 694.3 V696.5M270.5 694.1 V696.3M271.5 693.3 V696.1M273.5 691.6 V695.5M274.5 690.7 V695.3M276.5 689.5 V694.2M277.5 688.8 V693.6M279.5 687.3 V692.3M280.5 687.0 V691.8M282.5 689.4 V691.4M288.5 689.4 V692.0M289.5 689.0 V691.9M291.5 687.5 V691.2M292.5 686.6 V690.8M294.5 684.8 V689.9M295.5 684.2 V689.3M297.5 682.8 V688.0M298.5 682.1 V687.3M300.5 680.8 V686.0M301.5 680.1 V685.3M303.5 679.6 V684.1M304.5 679.4 V683.6M306.5 678.9 V682.6M307.5 678.6 V682.2M309.5 677.8 V681.5M310.5 677.0 V681.0M312.5 675.3 V680.0M313.5 674.5 V679.6M315.5 673.1 V678.3M316.5 671.7 V677.4M318.5 668.7 V675.7M319.5 667.2 V674.8M321.5 664.9 V672.5M322.5 664.0 V671.4M324.5 662.2 V669.2M325.5 661.3 V668.1M327.5 659.5 V666.1M328.5 659.0 V665.3M330.5 658.0 V663.5M331.5 657.5 V662.7M333.5 656.5 V661.4M334.5 656.9 V661.0M336.5 657.6 V660.1M337.5 657.8 V659.8M339.5 657.8 V659.8M340.5 657.7 V659.7M342.5 657.2 V659.5M343.5 656.9 V659.4M345.5 656.4 V659.2M346.5 656.2 V659.0M348.5 654.7 V658.3M349.5 653.9 V658.0M351.5 652.5 V657.1M352.5 651.9 V656.6M354.5 650.8 V655.4M355.5 650.3 V654.9M357.5 649.2 V653.8M358.5 648.6 V653.2M360.5 648.6 V652.3M361.5 648.6 V651.9M363.5 648.4 V651.3M364.5 648.3 V651.1M366.5 648.6 V650.8M367.5 648.7 V650.7M423.5 659.8 V661.8M424.5 659.0 V661.8M426.5 657.6 V661.5M427.5 657.2 V661.1M429.5 656.3 V660.2M430.5 655.9 V659.8M432.5 656.0 V659.2M433.5 656.5 V659.0M465.5 664.8 V667.6M466.5 663.8 V667.6M468.5 662.7 V666.8M469.5 662.2 V666.4M471.5 661.2 V665.4M472.5 660.8 V665.0M474.5 659.9 V664.0M475.5 660.1 V663.7M477.5 660.3 V663.0M478.5 660.4 V662.7M480.5 660.2 V662.5M481.5 660.1 V662.4M483.5 659.9 V662.2M484.5 659.8 V662.1M486.5 659.7 V661.9M487.5 659.6 V661.8M489.5 659.4 V661.6M490.5 659.3 V661.6M492.5 659.2 V661.4M493.5 659.1 V661.3M495.5 658.9 V661.1M496.5 658.9 V661.1M498.5 658.9 V660.9M499.5 658.9 V660.9M501.5 658.8 V660.8M502.5 658.8 V660.8M504.5 658.7 V660.7M505.5 658.7 V660.7M507.5 658.6 V660.6M543.5 664.8 V667.6M544.5 663.9 V667.6M546.5 663.3 V667.0M547.5 663.4 V666.7M549.5 663.5 V666.0M550.5 663.4 V665.9M552.5 663.8 V665.8M570.5 673.1 V675.5M571.5 671.6 V675.6M573.5 669.5 V674.8M574.5 668.5 V674.1M576.5 666.5 V672.6M577.5 665.6 V671.8M579.5 662.8 V669.8M580.5 661.4 V668.8M582.5 659.0 V666.7M583.5 658.7 V665.7M585.5 658.2 V663.7M586.5 657.8 V662.8M588.5 656.6 V661.5M589.5 655.9 V660.9M591.5 654.1 V659.5M592.5 653.1 V658.8M594.5 651.1 V657.3M595.5 650.2 V656.4M597.5 648.5 V654.6M598.5 648.0 V653.9M600.5 647.5 V652.4M601.5 647.2 V651.7M603.5 646.2 V650.6M604.5 645.7 V650.1M606.5 644.9 V649.1M607.5 644.6 V648.6M609.5 644.0 V647.7M610.5 643.7 V647.3M612.5 642.9 V646.6M613.5 642.6 V646.2M615.5 642.5 V645.6M616.5 642.5 V645.4M618.5 642.3 V644.9M619.5 642.2 V644.8M621.5 641.9 V644.4M622.5 641.7 V644.3M624.5 641.7 V644.0M625.5 641.7 V643.9M627.5 641.7 V643.7M628.5 641.7 V643.7M630.5 641.6 V643.6M631.5 641.6 V643.6M633.5 641.5 V643.5M634.5 641.4 V643.4M636.5 641.2 V643.3M637.5 641.2 V643.3M639.5 641.0 V643.2M640.5 641.0 V643.1M642.5 640.9 V643.0M643.5 640.7 V642.9M645.5 640.4 V642.7M646.5 640.2 V642.6M648.5 639.9 V642.4M649.5 639.8 V642.3M651.5 640.2 V642.2M696.5 657.1 V659.2M697.5 657.0 V659.2M699.5 656.1 V658.9M700.5 655.7 V658.7M702.5 654.9 V658.2M703.5 654.6 V657.9M705.5 654.0 V657.3M706.5 654.0 V657.1M708.5 653.8 V656.6M709.5 653.8 V656.3M711.5 654.1 V656.2" stroke="#0000ff" stroke-width="1" fill="none"/>
<path d="M84.5 693.5 V696.0M85.5 693.7 V696.3M87.5 694.0 V697.2M88.5 694.3 V697.6M90.5 694.9 V698.5M91.5 695.3 V698.9M93.5 696.0 V699.6M94.5 696.3 V699.9M96.5 696.9 V700.1M97.5 697.3 V700.2M99.5 697.7 V700.5M100.5 697.9 V700.7M102.5 698.3 V701.1M103.5 698.5 V701.3M105.5 698.7 V701.0M106.5 698.8 V700.7M123.5 697.9 V699.9M124.5 698.0 V700.1M126.5 698.1 V700.5M127.5 698.2 V700.7M129.5 698.5 V701.0M130.5 698.6 V701.1M132.5 698.9 V701.3M133.5 699.0 V701.4M135.5 699.3 V701.6M136.5 699.4 V701.7M138.5 699.6 V701.9M139.5 699.7 V702.0M141.5 699.9 V702.1M142.5 699.9 V702.1M144.5 700.1 V701.9M145.5 700.1 V701.9M147.5 700.1 V701.9M148.5 700.1 V701.9M150.5 700.1 V701.9M151.5 700.1 V701.9M180.5 686.9 V689.1M181.5 686.8 V689.6M183.5 687.2 V690.1M184.5 687.4 V690.2M186.5 687.7 V689.9M187.5 687.8 V689.8M192.5 687.9 V689.7M193.5 687.9 V690.2M195.5 688.1 V691.0M196.5 688.3 V691.3M198.5 688.8 V691.8M199.5 689.0 V692.0M201.5 689.5 V692.4M202.5 689.7 V692.6M204.5 690.2 V693.0M205.5 690.4 V693.2M207.5 690.8 V693.6M208.5 691.0 V693.8M210.5 691.4 V694.2M211.5 691.6 V694.4M213.5 692.0 V694.8M214.5 692.2 V695.0M216.5 692.6 V695.3M217.5 692.8 V695.5M219.5 693.2 V695.9M220.5 693.4 V696.1M222.5 693.7 V696.6M223.5 693.9 V696.8M225.5 694.4 V697.2M226.5 694.6 V697.4M228.5 695.0 V697.8M229.5 695.2 V698.0M231.5 695.5 V698.1M232.5 695.7 V698.2M234.5 696.0 V698.3M235.5 696.1 V698.5M237.5 696.3 V698.7M238.5 696.4 V698.8M240.5 696.6 V698.9M241.5 696.7 V698.9M243.5 696.9 V698.9M244.5 696.9 V699.0M246.5 697.0 V699.1M247.5 697.1 V699.1M283.5 689.3 V692.4M285.5 689.5 V693.1M286.5 689.8 V692.6M369.5 648.8 V650.6M370.5 648.8 V650.7M372.5 649.1 V651.9M373.5 649.3 V652.7M375.5 649.8 V654.1M376.5 650.3 V654.5M378.5 651.2 V655.1M379.5 651.6 V655.4M381.5 652.4 V656.1M382.5 652.8 V656.5M384.5 653.5 V657.0M385.5 653.8 V657.0M387.5 654.4 V657.0M388.5 654.6 V657.1M390.5 654.9 V657.4M391.5 655.0 V657.5M393.5 655.3 V657.8M394.5 655.4 V658.0M396.5 655.7 V658.3M397.5 655.9 V658.4M399.5 656.2 V658.7M400.5 656.3 V658.8M402.5 656.6 V659.2M403.5 656.8 V659.3M405.5 657.1 V659.6M406.5 657.2 V659.8M408.5 657.5 V660.1M409.5 657.7 V660.2M411.5 658.0 V660.7M412.5 658.2 V660.9M414.5 658.6 V661.4M415.5 658.8 V661.6M417.5 659.2 V662.0M418.5 659.4 V662.2M420.5 659.8 V662.6M421.5 660.0 V662.8M435.5 656.8 V659.2M436.5 656.9 V659.5M438.5 657.2 V660.0M439.5 657.4 V660.3M441.5 657.9 V661.1M442.5 658.2 V661.6M444.5 658.8 V662.3M445.5 659.1 V662.7M447.5 659.9 V663.5M448.5 660.2 V664.0M450.5 661.0 V665.0M451.5 661.4 V665.5M453.5 662.3 V666.4M454.5 662.8 V666.8M456.5 663.6 V667.3M457.5 664.0 V667.5M459.5 664.7 V668.0M460.5 665.0 V668.4M462.5 665.6 V669.0M463.5 665.7 V668.5M508.5 658.8 V660.8M510.5 659.0 V661.6M511.5 659.0 V662.0M513.5 659.5 V662.5M514.5 659.7 V662.7M516.5 660.2 V663.2M517.5 660.4 V663.5M519.5 660.9 V664.0M520.5 661.2 V664.3M522.5 661.7 V664.8M523.5 662.0 V665.1M525.5 662.5 V665.5M526.5 662.7 V665.7M528.5 663.2 V666.0M529.5 663.4 V666.2M531.5 663.8 V666.6M532.5 664.0 V666.8M534.5 664.4 V667.2M535.5 664.6 V667.5M537.5 665.1 V668.0M538.5 665.3 V668.3M540.5 665.8 V668.7M541.5 665.9 V668.3M553.5 664.0 V666.5M555.5 664.2 V668.1M556.5 664.6 V668.8M558.5 665.9 V671.2M559.5 666.5 V672.4M561.5 668.1 V674.4M562.5 668.9 V675.2M564.5 670.6 V676.2M565.5 671.4 V676.7M567.5 672.8 V677.9M568.5 673.3 V677.7M652.5 640.4 V642.7M654.5 640.5 V644.1M655.5 640.9 V644.5M657.5 641.5 V645.0M658.5 641.9 V645.2M660.5 642.5 V645.6M661.5 642.8 V645.8M663.5 643.3 V646.3M664.5 643.5 V646.6M666.5 644.1 V647.2M667.5 644.3 V647.6M669.5 644.9 V648.2M670.5 645.2 V648.5M672.5 645.9 V649.4M673.5 646.4 V650.6M675.5 647.4 V653.0M676.5 648.0 V654.0M678.5 649.7 V655.7M679.5 650.5 V656.5M681.5 652.2 V658.2M682.5 653.0 V659.0M684.5 654.5 V659.9M685.5 655.1 V659.7M687.5 656.3 V659.2M688.5 656.6 V659.3M690.5 657.0 V659.7M691.5 657.1 V659.8M693.5 657.3 V659.5M694.5 657.4 V659.2M712.5 654.6 V657.3M714.5 655.0 V660.3M715.5 655.5 V661.8M717.5 657.5 V664.5M718.5 658.4 V665.8M720.5 660.7 V668.2M721.5 661.8 V669.4M723.5 664.1 V671.7M724.5 665.3 V672.9M726.5 667.6 V675.3M727.5 668.7 V676.1M729.5 670.8 V677.3M730.5 671.8 V677.9M732.5 673.5 V679.5M733.5 674.3 V679.9M735.5 675.7 V680.5M736.5 676.4 V680.8" stroke="#990000" stroke-width="1" fill="none"/>
<path d="M690.5 91.5H701 M698 89l3 2.5l-3 2.5" stroke="#c0c0c0" stroke-width="1" fill="none"/>
<path d="M271.5 380.5H282 M279 378l3 2.5l-3 2.5" stroke="#c0c0c0" stroke-width="1" fill="none"/></svg>
<div class="t cj" style="left:28px;top:8px;color:#000">系统</div>
<div class="t cj" style="left:68px;top:8px;color:#000">页面</div>
<div class="t cj" style="left:108px;top:8px;color:#000">图表</div>
<div class="t cj" style="left:148px;top:8px;color:#000">分析</div>
<div class="t cj" style="left:188px;top:8px;color:#000">新闻</div>
<div class="t cj" style="left:228px;top:8px;color:#000">中信建投专栏</div>
<div class="t cj" style="left:316px;top:8px;color:#000">手机行情</div>
<div class="t cj" style="left:380px;top:8px;color:#000">交易</div>
<div class="t cj" style="left:420px;top:8px;color:#000">工具</div>
<div class="t cj" style="left:460px;top:8px;color:#000">帮助</div>
<div class="t title" style="left:631px;top:2.5px;">中信建投-博易大师</div>
<div style="left:624px;top:25px;width:25px;height:22px;border:1px solid #202020;border-radius:4px;background:#e0f4c0"></div>
<div class="t cj" style="left:406px;top:31px;width:60px;text-align:center;color:#000">日</div>
<div class="t cj" style="left:431px;top:31px;width:60px;text-align:center;color:#000">周</div>
<div class="t cj" style="left:456px;top:31px;width:60px;text-align:center;color:#000">月</div>
<div class="t cj" style="left:481px;top:31px;width:60px;text-align:center;color:#000">季</div>
<div class="t pb" style="left:506px;top:31px;width:60px;text-align:center;color:#000">×</div>
<div class="t pb" style="left:531px;top:31px;width:60px;text-align:center;color:#000">1</div>
<div class="t pb" style="left:556px;top:31px;width:60px;text-align:center;color:#000">3</div>
<div class="t pb" style="left:581px;top:31px;width:60px;text-align:center;color:#000">5</div>
<div class="t pb" style="left:606.5px;top:31px;width:60px;text-align:center;color:#000">15</div>
<div class="t pb" style="left:631px;top:31px;width:60px;text-align:center;color:#000">30</div>
<div class="t pb" style="left:656px;top:31px;width:60px;text-align:center;color:#000">60</div>
<div class="t pb" style="left:681.5px;top:31px;width:60px;text-align:center;color:#000">2hr</div>
<div class="t pb" style="left:706.5px;top:31px;width:60px;text-align:center;color:#000">4hr</div>
<div class="t pb" style="left:730.5px;top:31px;width:60px;text-align:center;color:#000">Y</div>
<div class="t mg w" style="left:3px;top:52px;width:134px;height:12px;"><i class="c6" style="width:48px">欧元美元</i><i class="n6" style="width:54px">(EURUSD)&lt;</i><i class="d6" style="width:12px">15</i><i class="c6" style="width:12px">分</i><i class="n6" style="width:6px">&gt;</i></div>
<div class="t mg g" style="left:65px;top:72px;width:8px;height:12px;"><i class="n6" style="width:6px">K</i></div>
<div class="t mg g" style="left:79px;top:72px;width:20px;height:12px;"><i class="n6" style="width:12px">MA</i><i class="d6" style="width:6px">1</i></div>
<div class="t mg w" style="left:103px;top:72px;width:62px;height:12px;"><i class="n6" style="width:12px">MA</i><i class="d6" style="width:6px">1</i><i class="n6" style="width:6px">:</i><i class="d6" style="width:6px">1</i><i class="n6" style="width:6px">.</i><i class="d6" style="width:24px">3389</i></div>
<div class="t mg y" style="left:169px;top:72px;width:62px;height:12px;"><i class="n6" style="width:12px">MA</i><i class="d6" style="width:6px">2</i><i class="n6" style="width:6px">:</i><i class="d6" style="width:6px">1</i><i class="n6" style="width:6px">.</i><i class="d6" style="width:24px">3436</i></div>
<div class="t mg axc" style="left:24px;top:104px;width:37px;height:14px;"><i class="d7" style="width:7px">1</i><i class="n7" style="width:7px">.</i><i class="d7" style="width:21px">350</i></div>
<div class="t mg axc" style="left:24px;top:180px;width:37px;height:14px;"><i class="d7" style="width:7px">1</i><i class="n7" style="width:7px">.</i><i class="d7" style="width:21px">340</i></div>
<div class="t mg axc" style="left:24px;top:257px;width:37px;height:14px;"><i class="d7" style="width:7px">1</i><i class="n7" style="width:7px">.</i><i class="d7" style="width:21px">330</i></div>
<div class="t mg axc" style="left:24px;top:334px;width:37px;height:14px;"><i class="d7" style="width:7px">1</i><i class="n7" style="width:7px">.</i><i class="d7" style="width:21px">320</i></div>
<div class="t mg axc" style="left:45px;top:456px;width:16px;height:14px;"><i class="d7" style="width:14px">50</i></div>
<div class="t mg axc" style="left:52px;top:574px;width:9px;height:14px;"><i class="d7" style="width:7px">0</i></div>
<div class="t mg axc" style="left:45px;top:655px;width:16px;height:14px;"><i class="d7" style="width:14px">60</i></div>
<div class="t mg " style="left:647px;top:85px;width:44px;height:14px;color:#d4d4d4"><i class="d7" style="width:7px">1</i><i class="n7" style="width:7px">.</i><i class="d7" style="width:28px">3524</i></div>
<div class="t mg " style="left:228px;top:374px;width:44px;height:14px;color:#d4d4d4"><i class="d7" style="width:7px">1</i><i class="n7" style="width:7px">.</i><i class="d7" style="width:28px">3148</i></div>
<div class="t mg g" style="left:65px;top:401px;width:44px;height:12px;"><i class="n6" style="width:24px">RSI(</i><i class="d6" style="width:12px">14</i><i class="n6" style="width:6px">)</i></div>
<div class="t mg " style="left:113px;top:401px;width:74px;height:12px;color:#ff0000"><i class="n6" style="width:18px">RSI</i><i class="d6" style="width:6px">1</i><i class="n6" style="width:6px">:</i><i class="d6" style="width:12px">39</i><i class="n6" style="width:6px">.</i><i class="d6" style="width:24px">8052</i></div>
<div class="t mg w" style="left:191px;top:401px;width:68px;height:12px;"><i class="n6" style="width:12px">MA</i><i class="d6" style="width:6px">1</i><i class="n6" style="width:6px">:</i><i class="d6" style="width:12px">40</i><i class="n6" style="width:6px">.</i><i class="d6" style="width:24px">0485</i></div>
<div class="t mg y" style="left:263px;top:401px;width:68px;height:12px;"><i class="n6" style="width:12px">MA</i><i class="d6" style="width:6px">2</i><i class="n6" style="width:6px">:</i><i class="d6" style="width:12px">40</i><i class="n6" style="width:6px">.</i><i class="d6" style="width:24px">5621</i></div>
<div class="t mg m" style="left:335px;top:401px;width:44px;height:12px;"><i class="d6" style="width:12px">30</i><i class="n6" style="width:6px">.</i><i class="d6" style="width:24px">0000</i></div>
<div class="t mg gr" style="left:383px;top:401px;width:44px;height:12px;"><i class="d6" style="width:12px">50</i><i class="n6" style="width:6px">.</i><i class="d6" style="width:24px">0000</i></div>
<div class="t mg b" style="left:431px;top:401px;width:44px;height:12px;"><i class="d6" style="width:12px">70</i><i class="n6" style="width:6px">.</i><i class="d6" style="width:24px">0000</i></div>
<div class="t mg g" style="left:479px;top:401px;width:44px;height:12px;"><i class="d6" style="width:12px">40</i><i class="n6" style="width:6px">.</i><i class="d6" style="width:24px">0000</i></div>
<div class="t mg g" style="left:527px;top:401px;width:44px;height:12px;"><i class="d6" style="width:12px">60</i><i class="n6" style="width:6px">.</i><i class="d6" style="width:24px">0000</i></div>
<div class="t mg g" style="left:65px;top:525px;width:80px;height:12px;"><i class="n6" style="width:30px">MACD(</i><i class="d6" style="width:12px">26</i><i class="n6" style="width:6px">,</i><i class="d6" style="width:12px">12</i><i class="n6" style="width:6px">,</i><i class="d6" style="width:6px">9</i><i class="n6" style="width:6px">)</i></div>
<div class="t mg w" style="left:149px;top:525px;width:74px;height:12px;"><i class="n6" style="width:36px">DIFF:-</i><i class="d6" style="width:6px">0</i><i class="n6" style="width:6px">.</i><i class="d6" style="width:24px">1780</i></div>
<div class="t mg y" style="left:227px;top:525px;width:68px;height:12px;"><i class="n6" style="width:30px">DEA:-</i><i class="d6" style="width:6px">0</i><i class="n6" style="width:6px">.</i><i class="d6" style="width:24px">1709</i></div>
<div class="t mg g" style="left:299px;top:525px;width:74px;height:12px;"><i class="n6" style="width:36px">MACD:-</i><i class="d6" style="width:6px">0</i><i class="n6" style="width:6px">.</i><i class="d6" style="width:24px">0142</i></div>
<div class="t mg g" style="left:65px;top:628px;width:32px;height:12px;"><i class="n6" style="width:6px">B</i><i class="c6" style="width:24px">指标</i></div>
<div class="t mg w" style="left:101px;top:628px;width:62px;height:12px;"><i class="c6" style="width:12px">股</i><i class="n6" style="width:6px">:</i><i class="d6" style="width:12px">35</i><i class="n6" style="width:6px">.</i><i class="d6" style="width:24px">1709</i></div>
<div class="t mg y" style="left:167px;top:628px;width:62px;height:12px;"><i class="c6" style="width:12px">差</i><i class="n6" style="width:12px">:-</i><i class="d6" style="width:6px">5</i><i class="n6" style="width:6px">.</i><i class="d6" style="width:24px">2938</i></div>
<div class="t mg m" style="left:233px;top:628px;width:44px;height:12px;"><i class="d6" style="width:12px">30</i><i class="n6" style="width:6px">.</i><i class="d6" style="width:24px">0000</i></div>
<div class="t mg gr" style="left:281px;top:628px;width:44px;height:12px;"><i class="d6" style="width:12px">50</i><i class="n6" style="width:6px">.</i><i class="d6" style="width:24px">0000</i></div>
<div class="t mg b" style="left:329px;top:628px;width:44px;height:12px;"><i class="d6" style="width:12px">70</i><i class="n6" style="width:6px">.</i><i class="d6" style="width:24px">0000</i></div>
<div class="t mg " style="left:34px;top:708px;width:26px;height:12px;color:#e0e0e0"><i class="d6" style="width:12px">15</i><i class="c6" style="width:12px">分</i></div>
<div class="t mg " style="left:65px;top:708px;width:26px;height:12px;color:#e8e8e8"><i class="d6" style="width:24px">0930</i></div>
<div class="t mg " style="left:185px;top:708px;width:26px;height:12px;color:#e8e8e8"><i class="d6" style="width:24px">1004</i></div>
<div class="t mg " style="left:320px;top:708px;width:14px;height:12px;color:#e8e8e8"><i class="d6" style="width:12px">05</i></div>
<div class="t mg " style="left:447px;top:708px;width:14px;height:12px;color:#e8e8e8"><i class="d6" style="width:12px">06</i></div>
<div class="t mg " style="left:576px;top:708px;width:14px;height:12px;color:#e8e8e8"><i class="d6" style="width:12px">07</i></div>
<div style="left:664px;top:704px;width:70px;height:16px;background:#0060ff;border:1px solid #fff"></div>
<div class="t mg w" style="left:667px;top:708px;width:68px;height:12px;"><i class="d6" style="width:12px">10</i><i class="n6" style="width:6px">-</i><i class="d6" style="width:12px">07</i><i class="n6" style="width:6px"> </i><i class="d6" style="width:12px">15</i><i class="n6" style="width:6px">:</i><i class="d6" style="width:12px">15</i></div>
<div style="left:754px;top:50px;width:16px;height:14px;border:1px solid #60b0ff;background:#000"></div>
<div style="left:771px;top:50px;width:16px;height:14px;border:1px solid #60b0ff;background:#000"></div>
<svg style="position:absolute;left:754px;top:50px" width="34" height="14" viewBox="0 0 34 14"><path d="M3.5 7l4-4v2.5h5v3h-5V11z" fill="none" stroke="#a0d0ff" stroke-width="1"/><path d="M29.5 7l-4-4v2.5h-5v3h5V11z" fill="none" stroke="#a0d0ff" stroke-width="1"/></svg>
<div style="left:1004px;top:50px;width:16px;height:14px;border:1px solid #60b0ff;background:#000"></div>
<div style="left:1007px;top:52px;width:10px;height:8px;border:1px solid #a0d0ff;border-top-width:2px"></div>
<div class="t rh" style="left:826px;top:51px;font-size:17.5px;letter-spacing:1.5px">欧元美元<i style="display:inline-block;position:relative;top:0px;left:0.5px;width:76px;font-size:20px;letter-spacing:0;transform:scaleX(0.82);transform-origin:0 70%">(EURUSD)</i></div>
<div class="t rc w" style="left:794px;top:76px;">卖出</div>
<div class="t ar w" style="right:129.5px;top:77px;">---</div>
<div class="t ar y" style="right:8.5px;top:77px;">0</div>
<div class="t rc w" style="left:794px;top:97px;">买入</div>
<div class="t ar w" style="right:129.5px;top:98px;">---</div>
<div class="t ar y" style="right:8.5px;top:98px;">0</div>
<div class="t rc w" style="left:794px;top:118px;">最新</div>
<div class="t ar w" style="right:129.5px;top:119px;">---</div>
<div class="t rc w" style="left:915px;top:118px;">均价</div>
<div class="t ar w" style="right:8.5px;top:119px;">---</div>
<div class="t rc w" style="left:794px;top:138px;">涨跌</div>
<div class="t ar w" style="right:129.5px;top:139px;">---</div>
<div class="t rc w" style="left:915px;top:138px;">昨收</div>
<div class="t ar w" style="right:8.5px;top:139px;">---</div>
<div class="t rc w" style="left:794px;top:158.5px;">幅度</div>
<div class="t ar lg" style="right:129.5px;top:159.5px;">0.00%</div>
<div class="t rc w" style="left:915px;top:158.5px;">开盘</div>
<div class="t ar w" style="right:8.5px;top:159.5px;">---</div>
<div class="t rc w" style="left:794px;top:178.5px;">总手</div>
<div class="t ar y" style="right:129.5px;top:179.5px;">0</div>
<div class="t rc w" style="left:915px;top:178.5px;">最高</div>
<div class="t ar w" style="right:8.5px;top:179.5px;">---</div>
<div class="t rc w" style="left:794px;top:198.5px;">现手</div>
<div class="t ar y" style="right:129.5px;top:199.5px;">0</div>
<div class="t rc w" style="left:915px;top:198.5px;">最低</div>
<div class="t ar w" style="right:8.5px;top:199.5px;">---</div>
<div class="t rc w" style="left:794px;top:218.5px;">金额</div>
<div class="t ar y" style="right:129.5px;top:219.5px;">0.00</div>
<div class="t rc w" style="left:915px;top:218.5px;">量比</div>
<div class="t ar lg" style="right:8.5px;top:219.5px;">1.00</div>
<div class="t rc w" style="left:794px;top:240px;">外盘</div>
<div class="t ar r" style="right:129.5px;top:241px;">---</div>
<div class="t rc w" style="left:915px;top:240px;">内盘</div>
<div class="t ar gr" style="right:8.5px;top:241px;">---</div>
<div class="t rc dg" style="left:794px;top:261px;">北京</div>
<div class="t rc dg" style="left:892px;top:261px;">价格</div>
<div class="t rc dg" style="left:974px;top:261px;">现手</div>
<div class="t ar w" style="left:794px;top:283.5px;">04:57</div>
<div class="t ar r" style="right:107.5px;top:283.5px;">1.3376</div>
<div class="t ar w" style="right:24.5px;top:283.5px;">0</div>
<div class="t ar w" style="left:794px;top:305.5px;">04:58</div>
<div class="t ar r" style="right:107.5px;top:305.5px;">1.3375</div>
<div class="t ar gr" style="right:24.5px;top:305.5px;">0</div>
<div class="t ar w" style="left:794px;top:327.5px;">04:58</div>
<div class="t ar r" style="right:107.5px;top:327.5px;">1.3376</div>
<div class="t ar w" style="right:24.5px;top:327.5px;">0</div>
<div class="t ar w" style="left:794px;top:349.5px;">04:58</div>
<div class="t ar r" style="right:107.5px;top:349.5px;">1.3377</div>
<div class="t ar w" style="right:24.5px;top:349.5px;">0</div>
<div class="t ar w" style="left:794px;top:371.5px;">04:58</div>
<div class="t ar r" style="right:107.5px;top:371.5px;">1.3376</div>
<div class="t ar gr" style="right:24.5px;top:371.5px;">0</div>
<div class="t ar w" style="left:794px;top:393.5px;">04:58</div>
<div class="t ar r" style="right:107.5px;top:393.5px;">1.3377</div>
<div class="t ar w" style="right:24.5px;top:393.5px;">0</div>
<div class="t ar w" style="left:794px;top:415.5px;">04:58</div>
<div class="t ar r" style="right:107.5px;top:415.5px;">1.3376</div>
<div class="t ar gr" style="right:24.5px;top:415.5px;">0</div>
<div class="t ar w" style="left:794px;top:437.5px;">04:58</div>
<div class="t ar r" style="right:107.5px;top:437.5px;">1.3377</div>
<div class="t ar w" style="right:24.5px;top:437.5px;">0</div>
<div class="t ar w" style="left:794px;top:459.5px;">04:58</div>
<div class="t ar r" style="right:107.5px;top:459.5px;">1.3378</div>
<div class="t ar w" style="right:24.5px;top:459.5px;">0</div>
<div class="t ar w" style="left:794px;top:481.5px;">04:58</div>
<div class="t ar r" style="right:107.5px;top:481.5px;">1.3379</div>
<div class="t ar w" style="right:24.5px;top:481.5px;">0</div>
<div class="t ar w" style="left:794px;top:503.5px;">04:58</div>
<div class="t ar r" style="right:107.5px;top:503.5px;">1.3378</div>
<div class="t ar gr" style="right:24.5px;top:503.5px;">0</div>
<div class="t ar w" style="left:794px;top:525.5px;">04:58</div>
<div class="t ar r" style="right:107.5px;top:525.5px;">1.3379</div>
<div class="t ar w" style="right:24.5px;top:525.5px;">0</div>
<div class="t ar w" style="left:794px;top:547.5px;">04:58</div>
<div class="t ar r" style="right:107.5px;top:547.5px;">1.3378</div>
<div class="t ar gr" style="right:24.5px;top:547.5px;">0</div>
<div class="t ar w" style="left:794px;top:569.5px;">04:58</div>
<div class="t ar r" style="right:107.5px;top:569.5px;">1.3379</div>
<div class="t ar w" style="right:24.5px;top:569.5px;">0</div>
<div class="t ar w" style="left:794px;top:591.5px;">04:59</div>
<div class="t ar r" style="right:107.5px;top:591.5px;">1.3380</div>
<div class="t ar w" style="right:24.5px;top:591.5px;">0</div>
<div class="t ar w" style="left:794px;top:613.5px;">04:59</div>
<div class="t ar r" style="right:107.5px;top:613.5px;">1.3379</div>
<div class="t ar gr" style="right:24.5px;top:613.5px;">0</div>
<div class="t ar w" style="left:794px;top:635.5px;">04:59</div>
<div class="t ar r" style="right:107.5px;top:635.5px;">1.3380</div>
<div class="t ar w" style="right:24.5px;top:635.5px;">0</div>
<div class="t ar w" style="left:794px;top:657.5px;">04:59</div>
<div class="t ar r" style="right:107.5px;top:657.5px;">1.3379</div>
<div class="t ar gr" style="right:24.5px;top:657.5px;">0</div>
<div class="t ar w" style="left:794px;top:679.5px;">04:59</div>
<div class="t ar r" style="right:107.5px;top:679.5px;">1.3378</div>
<div class="t ar gr" style="right:24.5px;top:679.5px;">0</div>
<div class="t ar w" style="left:794px;top:701.5px;">04:59</div>
<div class="t ar r" style="right:107.5px;top:701.5px;">1.3377</div>
<div class="t ar gr" style="right:24.5px;top:701.5px;">0</div>
<svg width="1024" height="18" viewBox="0 0 1024 18" shape-rendering="crispEdges" style="position:absolute;left:0;top:720px"><defs><pattern id="p3" width="4" height="4" patternUnits="userSpaceOnUse"><rect width="4" height="4" fill="#ccccff"/><rect x="0" y="0" width="1" height="1" fill="#ccffff"/><rect x="2" y="2" width="1" height="1" fill="#ccffff"/><rect x="2" y="0" width="1" height="1" fill="#ffffff"/><rect x="0" y="2" width="1" height="1" fill="#ccffff"/><rect x="0" y="1" width="1" height="1" fill="#cccccc"/><rect x="2" y="1" width="1" height="1" fill="#cccccc"/><rect x="0" y="3" width="1" height="1" fill="#cccccc"/><rect x="2" y="3" width="1" height="1" fill="#cccccc"/><rect x="1" y="1" width="1" height="1" fill="#cccccc"/><rect x="3" y="3" width="1" height="1" fill="#cccccc"/></pattern></defs><rect x="0" y="0" width="1024" height="18" fill="url(#p3)"/><rect x="0" y="0" width="1024" height="1" fill="#f4f4f4"/><rect x="0" y="1" width="1024" height="1" fill="#b0b0b8"/><rect x="0" y="17" width="1024" height="1" fill="#a0a0c0"/><rect x="184" y="3" width="1" height="14" fill="#f0f0ff"/><rect x="368" y="3" width="1" height="14" fill="#9090a8"/><rect x="369" y="3" width="1" height="14" fill="#f8f8ff"/><rect x="833" y="3" width="82" height="15" fill="#0000ff"/><rect x="955" y="3" width="1" height="14" fill="#9090a8"/><rect x="956" y="3" width="1" height="14" fill="#f8f8ff"/><rect x="987" y="3" width="1" height="14" fill="#9090a8"/><rect x="988" y="3" width="1" height="14" fill="#f8f8ff"/><g fill="#0030d0"><path d="M961 5h10l-4 5v6h-2v-6z"/><rect x="973" y="13" width="2" height="3"/><rect x="976" y="10" width="2" height="6"/><rect x="979" y="7" width="2" height="9"/></g></svg>
<svg width="17" height="462" viewBox="0 0 17 462" shape-rendering="crispEdges" style="position:absolute;left:1004px;top:257px"><defs><pattern id="p4" width="4" height="4" patternUnits="userSpaceOnUse"><rect width="4" height="4" fill="#ffffff"/><rect x="1" y="1" width="1" height="1" fill="#f0f0d8"/><rect x="3" y="3" width="1" height="1" fill="#f0e0e0"/><rect x="3" y="1" width="1" height="1" fill="#f4f4ec"/><rect x="1" y="3" width="1" height="1" fill="#f4f4ec"/></pattern><linearGradient id="sg" x1="0" x2="1" y1="0" y2="0"><stop offset="0" stop-color="#d4dcff"/><stop offset="1" stop-color="#b8c4f4"/></linearGradient></defs><rect x="0" y="0" width="17" height="462" fill="url(#p4)"/><g shape-rendering="auto"><rect x="1.5" y="1.5" width="14" height="15" rx="2" fill="url(#sg)" stroke="#e8ecff" stroke-width="1"/><path d="M4.5 10.5l4-4l4 4" fill="none" stroke="#404c78" stroke-width="2"/><rect x="1.5" y="429.5" width="14" height="15" rx="2" fill="url(#sg)" stroke="#e8ecff" stroke-width="1"/><path d="M5 434.5h7M5 436.5h7M5 438.5h7M5 440.5h7" stroke="#9aa8e0" stroke-width="1"/><rect x="1.5" y="445.5" width="14" height="16" rx="2" fill="url(#sg)" stroke="#e8ecff" stroke-width="1"/><path d="M4.5 451.5l4 4l4-4" fill="none" stroke="#404c78" stroke-width="2"/></g></svg>
<svg width="64" height="24" viewBox="0 0 64 24" style="position:absolute;left:960px;top:1px"><defs><radialGradient id="wb" cx="0.4" cy="0.35" r="0.7"><stop offset="0" stop-color="#ffffff"/><stop offset="0.7" stop-color="#e0f0f4"/><stop offset="1" stop-color="#b8c8d8"/></radialGradient></defs><circle cx="12" cy="11" r="8" fill="url(#wb)" stroke="#8c8c98" stroke-width="1.4"/><circle cx="32" cy="11" r="8" fill="url(#wb)" stroke="#8c8c98" stroke-width="1.4"/><circle cx="52" cy="11" r="8" fill="url(#wb)" stroke="#8c8c98" stroke-width="1.4"/><path d="M9 14.5h5" stroke="#283058" stroke-width="2"/><path d="M28.5 10.5h5v4h-5z M30.5 8h5v4" fill="none" stroke="#283058" stroke-width="1.3"/><path d="M49 8l6 6M55 8l-6 6" stroke="#283058" stroke-width="2"/></svg>
<svg width="20" height="20" viewBox="0 0 20 20" style="position:absolute;left:1px;top:2px"><circle cx="8" cy="9.5" r="7" fill="#f4f4fc" stroke="#8898b0" stroke-width="1.3"/><path d="M5 8.5l3-3l3 3M5 10.5l3 3l3-3" fill="none" stroke="#181868" stroke-width="1.8"/></svg>
<svg width="430" height="23" viewBox="0 0 430 23" style="position:absolute;left:0;top:25px"><g transform="translate(0,-25)"><defs><linearGradient id="bk" x1="0" x2="0" y1="0" y2="1"><stop offset="0" stop-color="#5080c8"/><stop offset="0.5" stop-color="#88b8e8"/><stop offset="1" stop-color="#a8d4f8"/></linearGradient></defs><rect x="4.5" y="28.5" width="15.5" height="15" rx="3.5" fill="url(#bk)" stroke="#4878c0" stroke-width="1"/><path d="M7.5 36l4-3.5v2h4.5v3h-4.5v2z" fill="#e8f4ff" stroke="#d0e4f8" stroke-width="0.6"/><g transform="translate(29.5,29)"><rect x="0.5" y="0.5" width="15" height="13" fill="#f4f8ff" stroke="#3070d8" stroke-width="1"/><rect x="0" y="0" width="16" height="2" fill="#2868d8"/><rect x="1" y="0" width="14" height="1" fill="#58a0f0"/><rect x="0" y="13" width="16" height="1" fill="#1c50b8"/><path d="M2 10.5l3.5-3.5l3 2l5.5-5" fill="none" stroke="#ff1010" stroke-width="1.5"/></g><g transform="translate(54.5,29)"><rect x="0.5" y="0.5" width="15" height="13" fill="#f4f8ff" stroke="#3070d8" stroke-width="1"/><rect x="0" y="0" width="16" height="2" fill="#2868d8"/><rect x="1" y="0" width="14" height="1" fill="#58a0f0"/><rect x="0" y="13" width="16" height="1" fill="#1c50b8"/><path d="M3.5 4v8.5M12.5 4v8.5" stroke="#3060d0" stroke-width="1"/><path d="M3.5 6v4M12.5 6v4" stroke="#3060d0" stroke-width="2.2"/><path d="M8 2.5v9" stroke="#ff2020" stroke-width="1"/><path d="M8 4v5" stroke="#ff2020" stroke-width="2.6"/><path d="M1.5 10q3-5 6.5-3t6.5 3" fill="none" stroke="#f8e000" stroke-width="1.2"/></g><g transform="translate(79.5,29)"><rect x="0.5" y="0.5" width="15" height="13" fill="#f4f8ff" stroke="#3070d8" stroke-width="1"/><rect x="0" y="0" width="16" height="2" fill="#2868d8"/><rect x="1" y="0" width="14" height="1" fill="#58a0f0"/><rect x="0" y="13" width="16" height="1" fill="#1c50b8"/><path d="M2.5 4.5h4.5M9 4.5h4.5" stroke="#50b050" stroke-width="1"/><path d="M2.5 7.5h4.5M9 7.5h4.5" stroke="#4080e0" stroke-width="1"/><path d="M2.5 10.5h4.5M9 10.5h4.5" stroke="#f08050" stroke-width="1"/></g><g transform="translate(104.5,29)"><rect x="0.5" y="0.5" width="15" height="13" fill="#f4f8ff" stroke="#3070d8" stroke-width="1"/><rect x="0" y="0" width="16" height="2" fill="#2868d8"/><rect x="1" y="0" width="14" height="1" fill="#58a0f0"/><rect x="0" y="13" width="16" height="1" fill="#1c50b8"/><path d="M2 5h7M2 7.5h6M2 10h5" stroke="#3068d0" stroke-width="1.5"/><circle cx="11.5" cy="10" r="3.6" fill="#2080c0"/><path d="M9.5 9q2-2 3.5 0t0 3" fill="#40b040"/></g><g transform="translate(129.5,29)"><rect x="0.5" y="0.5" width="15" height="13" fill="#f4f8ff" stroke="#3070d8" stroke-width="1"/><rect x="0" y="0" width="16" height="2" fill="#2868d8"/><rect x="1" y="0" width="14" height="1" fill="#58a0f0"/><rect x="0" y="13" width="16" height="1" fill="#1c50b8"/><text x="1.8" y="11.6" font-family="Liberation Sans,sans-serif" font-weight="bold" font-size="9.5" fill="#103090" textLength="12.6" lengthAdjust="spacingAndGlyphs">F10</text></g><rect x="154" y="28" width="1" height="17" fill="#9c9cb4"/><rect x="155" y="28" width="1" height="17" fill="#f8f8ff"/><rect x="309" y="28" width="1" height="17" fill="#9c9cb4"/><rect x="310" y="28" width="1" height="17" fill="#f8f8ff"/><rect x="419" y="28" width="1" height="17" fill="#9c9cb4"/><rect x="420" y="28" width="1" height="17" fill="#f8f8ff"/><g transform="translate(164,28)"><path d="M1.5 0.5h7.5l4 4v11h-11.5z" fill="#fff4b8" stroke="#5c88c8" stroke-width="1"/><path d="M9 0.5v4h4" fill="#dce8ff" stroke="#5c88c8" stroke-width="1"/><path d="M4.2 9a3.4 3.4 0 0 1 5.6-2.6M10.8 8a3.4 3.4 0 0 1-5.6 2.6" fill="none" stroke="#20a020" stroke-width="1.8"/><path d="M9 3.8l2.3 3.2l-3.6 0.3z M6 13.2l-2.3-3.2l3.6-0.3z" fill="#20a020"/></g><g transform="translate(187,28)"><path d="M1.5 15l4.5-4.5" stroke="#b87828" stroke-width="2.6" stroke-linecap="round"/><path d="M1.5 15l4.5-4.5" stroke="#f4c870" stroke-width="1" stroke-linecap="round"/><circle cx="8" cy="8" r="4.3" fill="#dcecff" stroke="#7888a0" stroke-width="1.2"/><path d="M5.5 7.5a2.6 2.6 0 0 1 3-2" fill="none" stroke="#fff" stroke-width="1.2"/><circle cx="12.3" cy="4.3" r="3" fill="#f8f8f8" stroke="#202020" stroke-width="1"/><path d="M10.8 4.3h3 M12.3 2.8v3" stroke="#101010" stroke-width="1.1"/></g><g transform="translate(212,28)"><path d="M1.5 15l4.5-4.5" stroke="#b87828" stroke-width="2.6" stroke-linecap="round"/><path d="M1.5 15l4.5-4.5" stroke="#f4c870" stroke-width="1" stroke-linecap="round"/><circle cx="8" cy="8" r="4.3" fill="#dcecff" stroke="#7888a0" stroke-width="1.2"/><path d="M5.5 7.5a2.6 2.6 0 0 1 3-2" fill="none" stroke="#fff" stroke-width="1.2"/><circle cx="12.3" cy="4.3" r="3" fill="#f8f8f8" stroke="#202020" stroke-width="1"/><path d="M10.8 4.3h3" stroke="#101010" stroke-width="1.1"/></g><g transform="translate(237,28)"><rect x="1" y="0.5" width="6" height="5" fill="#f8d020" stroke="#806000" stroke-width="0.6"/><rect x="8" y="0.5" width="7" height="5" fill="#ff3020" stroke="#802010" stroke-width="0.6"/><rect x="4" y="2" width="6" height="3" fill="#3060d0"/><path d="M5.5 15.5v-4l-1.5-2.5l1-0.8l1.5 1.5v-5h1.8v4h1v-1h1.5v1.5h1.2v1.5h1v5.3z" fill="#fff" stroke="#202020" stroke-width="0.9"/></g><g transform="translate(262,28)"><rect x="0.5" y="1.5" width="10" height="8" fill="#fff" stroke="#2868d8" stroke-width="1.2"/><rect x="5.5" y="6.5" width="10" height="8" fill="#fff" stroke="#2868d8" stroke-width="1.2"/><path d="M4 5l7 7" stroke="#e81010" stroke-width="2"/><path d="M12.5 8v5.5h-5.5z" fill="#e81010"/></g><g transform="translate(287,28)"><rect x="0.5" y="1.5" width="14" height="13" fill="#fff" stroke="#2868d8" stroke-width="1.2"/><rect x="10" y="2" width="4" height="12" fill="#e04040"/><path d="M10 3.5h4M10 5.5h4M10 7.5h4M10 9.5h4M10 11.5h4" stroke="#fff" stroke-width="0.8"/><path d="M2 8h4.5v-2.5l3.5 3l-3.5 3v-2.5h-4.5z" fill="#2060d0"/></g><rect x="316.5" y="26.5" width="24" height="20" rx="3.5" fill="#e0f4c0" stroke="#202020" stroke-width="1"/><g transform="translate(320,29)"><rect x="0.5" y="0.5" width="15" height="13" fill="#f4fff4" stroke="#2868d8" stroke-width="1"/><rect x="0" y="0" width="16" height="2.5" fill="#2060d0"/><path d="M3 11h4l6.5-6.5" fill="none" stroke="#101060" stroke-width="1.5"/><path d="M3 12.2h6" stroke="#101060" stroke-width="1"/></g><g transform="translate(345,28)"><path d="M8 1.5q1.2 0 1.2 1.2q3 1.2 3 5.3v2.5l2.3 2.5h-13l2.3-2.5v-2.5q0-4.1 3-5.3q0-1.2 1.2-1.2z" fill="#f02828" stroke="#901010" stroke-width="0.8"/><path d="M1 13.5h14" stroke="#801010" stroke-width="1.4"/><circle cx="8" cy="15" r="1.3" fill="#404040"/><path d="M6 5q1-2 2.5-2" stroke="#ffb0a0" stroke-width="1" fill="none"/></g><g transform="translate(370,28)"><circle cx="5" cy="4.5" r="3.2" fill="#303038"/><path d="M0.5 15v-4q0-3 4.5-3t4.5 3v4z" fill="#3068c8"/><circle cx="11.5" cy="4.5" r="3" fill="#f0c890" stroke="#a07040" stroke-width="0.6"/><path d="M7.5 15v-4q0-3 4-3t4 3v4z" fill="#48b048"/><path d="M4 9.5l1 2.5l1-2.5z" fill="#fff"/></g><g transform="translate(395,28)"><path d="M9.5 0.5l-6.5 8h4l-3.5 7l9-9.5h-4.5l4.5-5.5z" fill="#ffb820" stroke="#e07000" stroke-width="0.9"/></g></g></svg>
<svg width="84" height="284" viewBox="0 0 84 284" style="position:absolute;left:809px;top:297px"><defs><pattern id="p5" width="2" height="2" patternUnits="userSpaceOnUse"><rect width="2" height="2" fill="#f4f0dc"/><rect x="0" y="0" width="1" height="1" fill="#ece4d4"/><rect x="1" y="1" width="1" height="1" fill="#f0ecd0"/></pattern><linearGradient id="pt" x1="0" x2="1" y1="0" y2="0"><stop offset="0" stop-color="#8090e4"/><stop offset="0.5" stop-color="#6878d4"/><stop offset="1" stop-color="#8498ec"/></linearGradient></defs><rect x="0" y="0" width="84" height="283" fill="#6c7cdc" shape-rendering="crispEdges"/><rect x="0" y="0" width="84" height="21" fill="url(#pt)" shape-rendering="crispEdges"/><rect x="3" y="21" width="77" height="259" fill="url(#p5)" shape-rendering="crispEdges"/><rect x="66" y="6" width="12" height="11" rx="1.5" fill="#b46c8c" stroke="#e4c0d0" stroke-width="1"/><path d="M69 8.5l6 6M75 8.5l-6 6" stroke="#fff" stroke-width="2"/><g transform="translate(-809,-297)" fill="none" stroke="#000" stroke-width="1.15"><path d="M819.2 325.5L830.7 336.3"/><path d="M845.7 325.9L856.2 335.7"/><circle cx="845.7" cy="325.9" r="0.8" fill="#000"/><circle cx="856.2" cy="335.7" r="0.8" fill="#000"/><path d="M871.4 328.2L879.5 336.3M874.8 325.5L882.9 332.6"/><path d="M818.6 357.3H831.8M818.9 355.8v3"/><path d="M850.4 350.3V363.4M848.9 350.5h3"/><rect x="872.3" y="353.5" width="9.3" height="6.9"/><path d="M819.9 388.2L830.7 377.4"/><circle cx="819.9" cy="388.2" r="0.8" fill="#000"/><path d="M845.7 377.7L856.5 388.5"/><circle cx="845.7" cy="377.7" r="0.8" fill="#000"/><path d="M872.5 381.5c0-6 5-6 5.3 1.3s5.2 7.3 5.2 1.2"/><path d="M820 404.3h5a4.7 4.7 0 0 1 0 9.4h-5"/><path d="M845.7 414.7H856.9M845.7 414.7L856.9 403.3"/><path d="M847 414L856.5 409.5" stroke="#1040c0"/><path d="M871.4 403.3V414.7H883M871.4 414.7L883 403.3"/><path d="M871.8 414.3L876 404M871.8 414.3L880 406M871.8 414.3L882.5 409.5M871.8 414.3L882.8 412" stroke="#1040c0" stroke-width="1"/><path d="M818 429.8h14M818 441.2h14" stroke="#000" stroke-width="1.2"/><path d="M824 432.5h8M824 435.5h8M824 438.5h8" stroke="#1040c0" stroke-width="1.2"/><text x="817.7" y="439" font-family="Liberation Sans,sans-serif" font-weight="bold" font-size="8" fill="#1040c0" stroke="none">G</text><path d="M844 429.8h14M844 441.2h14" stroke="#000" stroke-width="1.2"/><path d="M850 432.5h8M850 435.5h8M850 438.5h8" stroke="#1040c0" stroke-width="1.2"/><text x="843.7" y="439" font-family="Liberation Sans,sans-serif" font-weight="bold" font-size="8" fill="#1040c0" stroke="none">%</text><path d="M870 429.8h14M870 441.2h14" stroke="#000" stroke-width="1.2"/><path d="M876 432.5h8M876 435.5h8M876 438.5h8" stroke="#1040c0" stroke-width="1.2"/><text x="869.7" y="439" font-family="Liberation Sans,sans-serif" font-weight="bold" font-size="8" fill="#1040c0" stroke="none">%</text><path d="M819.5 455.3v11.3" stroke="#1040c0" stroke-width="1.3"/><path d="M823.3 455.3v11.3M827.2 455.3v11.3M831 455.3v11.3"/><path d="M844.6 455.3v11.3" stroke="#1040c0" stroke-width="1.3"/><path d="M847.9 455.3v11.3M851.2 455.3v11.3M854.5 455.3v11.3M857.8 455.3v11.3"/><path d="M871.7 455.3v11.3M882.6 455.3v11.3"/><path d="M871.7 460l10.9-4M871.7 463.5l10.9-4M871.7 466.6l10.9-4" stroke="#1040c0" stroke-width="1"/><path d="M821.5 481.4v11.5M827.5 481.4v11.5"/><path d="M819.2 487l10.8-4M819.2 490l10.8-4M819.2 493l10.8-4" stroke="#1040c0" stroke-width="1"/><text x="845" y="492.6" font-family="Liberation Sans,sans-serif" font-weight="bold" font-size="15" fill="#000" stroke="none">A</text><circle cx="876.8" cy="486.8" r="7" fill="#c8c8d0" stroke="#2060a0" stroke-width="1.4"/><circle cx="876.8" cy="486.8" r="5" fill="none" stroke="#e02020" stroke-width="2" stroke-dasharray="1.6 1.6"/><circle cx="876.8" cy="486.8" r="2.4" fill="#e8e8f0" stroke="none"/></g><g transform="translate(-809,-297)" stroke="#101010" stroke-width="0.9" stroke-linejoin="miter"><path d="M0 -5.3L5 0H2.2V5H-2.2V0H-5Z" transform="translate(825.1,513.3) rotate(0) scale(1.0)" fill="#e83818"/><path d="M0 -5.3L5 0H2.2V5H-2.2V0H-5Z" transform="translate(851.6,512.3) rotate(45) scale(1.12)" fill="#f01010"/><path d="M0 -5.3L5 0H2.2V5H-2.2V0H-5Z" transform="translate(876.5,512.3) rotate(-45) scale(1.12)" fill="#f01010"/><path d="M0 -5.3L5 0H2.2V5H-2.2V0H-5Z" transform="translate(825.1,539.5) rotate(180) scale(1.0)" fill="#58b028"/><path d="M0 -5.3L5 0H2.2V5H-2.2V0H-5Z" transform="translate(850.8,538.4) rotate(135) scale(1.12)" fill="#58b028"/><path d="M0 -5.3L5 0H2.2V5H-2.2V0H-5Z" transform="translate(877.4,538.4) rotate(-135) scale(1.12)" fill="#58b028"/><path d="M818.3 567.5l8-6.5h4.5l-8 6.5z" fill="#f8e800"/><path d="M818.3 567.5h4.5v2h-4.5z" fill="#f0d000"/><path d="M822.8 567.5l8-6.5v2l-8 6.5z" fill="#c0a800"/><path d="M825 569.5h6" stroke="#808080" stroke-width="1.4"/><path d="M857.3 564.3l4.5-4v2.5h4.7v3h-4.7v2.5z" fill="#1050c8" stroke="none"/><rect x="858" y="569" width="6.5" height="2.5" fill="#e83010" stroke="none"/><rect x="866.5" y="563.5" width="3.5" height="2.6" fill="#e83010" stroke="none"/><path d="M866.5 560h3.5M866.5 568h3.5M866.5 570.5h3.5" stroke="#000" stroke-width="1.1"/></g><text x="4" y="16.2" font-family="Liberation Sans,Noto Sans CJK SC,sans-serif" font-weight="bold" font-size="11.5" fill="#fff">画线</text></svg>
<div class="t sbc" style="left:2px;top:724px;color:#0000e0">沪</div>
<div class="t sb" style="left:25px;top:724px;color:#108010">2359.22</div>
<div class="t sb" style="right:901px;top:724px;color:#108010">-6.12</div>
<div class="t sb" style="left:131px;top:724px;color:#101010">471.0<i class="sbc">亿</i></div>
<div class="t sbc" style="left:189px;top:724px;color:#0000e0">深</div>
<div class="t sb" style="left:206px;top:724px;color:#ff0000">10292.33</div>
<div class="t sb" style="right:712.5px;top:724px;color:#ff0000">4.43</div>
<div class="t sb" style="left:319px;top:724px;color:#101010">366.7<i class="sbc">亿</i></div>
<div class="t " style="left:835px;top:720px;color:#ffff00;font-family:&quot;DejaVu Sans&quot;,sans-serif;font-size:15px;line-height:18px">▲<i style="font-family:&quot;Liberation Sans&quot;,sans-serif;font-weight:bold;font-size:14px;position:relative;left:1px;top:0.5px">1</i></div>
<div class="t pobo" style="left:918px;top:722px;">p<span style="color:#ff0000;position:static">o</span>bo</div>
<div class="t ar" style="left:990px;top:724.5px;color:#0010f0;font-size:12.3px">14:04</div>
</div></body></html>
